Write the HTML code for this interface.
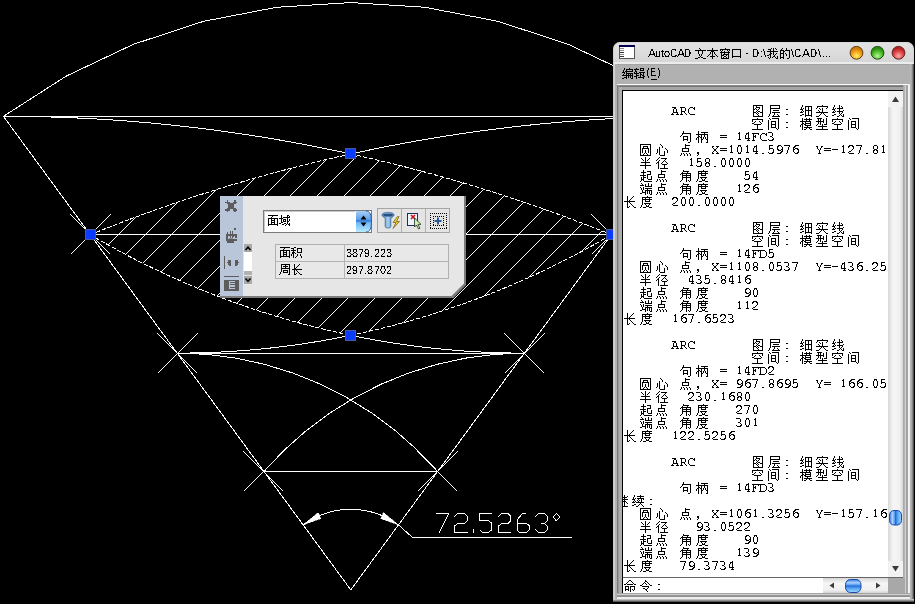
<!DOCTYPE html>
<html><head><meta charset="utf-8"><style>
*{margin:0;padding:0;box-sizing:border-box}
html,body{width:915px;height:604px;overflow:hidden;background:#000}
body{position:relative;font-family:"Liberation Sans",sans-serif}
.abs{position:absolute}
.r{position:absolute}
</style></head>
<body>
<svg width="915" height="604" viewBox="0 0 915 604" style="position:absolute;left:0;top:0">
<defs><clipPath id="lens"><path d="M90.27 234.69 L93.99 233.19 L97.72 231.70 L101.45 230.21 L105.19 228.74 L108.92 227.27 L112.67 225.82 L116.41 224.37 L120.16 222.93 L123.92 221.50 L127.67 220.09 L131.43 218.68 L135.20 217.28 L138.96 215.88 L142.73 214.50 L146.51 213.13 L150.29 211.77 L154.07 210.41 L157.85 209.07 L161.64 207.74 L165.43 206.41 L169.22 205.09 L173.02 203.79 L176.82 202.49 L180.62 201.20 L184.43 199.93 L188.24 198.66 L192.05 197.40 L195.87 196.15 L199.69 194.91 L203.51 193.68 L207.34 192.45 L211.17 191.24 L215.00 190.04 L218.83 188.85 L222.67 187.66 L226.51 186.49 L230.35 185.33 L234.20 184.17 L238.05 183.03 L241.90 181.89 L245.75 180.76 L249.61 179.65 L253.47 178.54 L257.33 177.44 L261.20 176.35 L265.07 175.28 L268.94 174.21 L272.81 173.15 L276.69 172.10 L280.57 171.06 L284.45 170.03 L288.33 169.01 L292.22 168.00 L296.11 166.99 L300.00 166.00 L303.89 165.02 L307.79 164.05 L311.69 163.09 L315.59 162.13 L319.49 161.19 L323.40 160.25 L327.31 159.33 L331.22 158.42 L335.13 157.51 L339.04 156.62 L342.96 155.73 L346.88 154.86 L350.80 153.99 L350.80 153.99 L354.72 154.86 L358.64 155.73 L362.56 156.62 L366.47 157.51 L370.38 158.42 L374.29 159.33 L378.20 160.25 L382.11 161.19 L386.01 162.13 L389.91 163.09 L393.81 164.05 L397.71 165.02 L401.60 166.00 L405.49 166.99 L409.38 168.00 L413.27 169.01 L417.15 170.03 L421.03 171.06 L424.91 172.10 L428.79 173.15 L432.66 174.21 L436.53 175.28 L440.40 176.35 L444.27 177.44 L448.13 178.54 L451.99 179.65 L455.85 180.76 L459.70 181.89 L463.55 183.03 L467.40 184.17 L471.25 185.33 L475.09 186.49 L478.93 187.66 L482.77 188.85 L486.60 190.04 L490.43 191.24 L494.26 192.45 L498.09 193.68 L501.91 194.91 L505.73 196.15 L509.55 197.40 L513.36 198.66 L517.17 199.93 L520.98 201.20 L524.78 202.49 L528.58 203.79 L532.38 205.09 L536.17 206.41 L539.96 207.74 L543.75 209.07 L547.53 210.41 L551.31 211.77 L555.09 213.13 L558.87 214.50 L562.64 215.88 L566.40 217.28 L570.17 218.68 L573.93 220.09 L577.68 221.50 L581.44 222.93 L585.19 224.37 L588.93 225.82 L592.68 227.27 L596.41 228.74 L600.15 230.21 L603.88 231.70 L607.61 233.19 L611.33 234.69 L611.33 234.73 L607.87 236.76 L604.41 238.77 L600.93 240.76 L597.45 242.74 L593.95 244.70 L590.45 246.64 L586.93 248.57 L583.41 250.48 L579.88 252.38 L576.34 254.26 L572.79 256.12 L569.23 257.96 L565.67 259.79 L562.09 261.60 L558.51 263.40 L554.92 265.18 L551.32 266.94 L547.71 268.68 L544.09 270.41 L540.47 272.12 L536.84 273.81 L533.20 275.49 L529.55 277.15 L525.90 278.79 L522.23 280.42 L518.56 282.03 L514.88 283.62 L511.20 285.19 L507.50 286.75 L503.80 288.28 L500.10 289.81 L496.38 291.31 L492.66 292.80 L488.93 294.27 L485.20 295.72 L481.46 297.15 L477.71 298.57 L473.95 299.97 L470.19 301.35 L466.42 302.71 L462.65 304.06 L458.87 305.39 L455.08 306.70 L451.29 307.99 L447.49 309.27 L443.68 310.53 L439.87 311.77 L436.05 312.99 L432.23 314.19 L428.40 315.38 L424.57 316.55 L420.73 317.70 L416.89 318.83 L413.04 319.94 L409.18 321.04 L405.32 322.12 L401.46 323.18 L397.59 324.22 L393.71 325.24 L389.84 326.25 L385.95 327.24 L382.06 328.20 L378.17 329.16 L374.27 330.09 L370.37 331.00 L366.46 331.90 L362.55 332.78 L358.64 333.64 L354.72 334.48 L350.80 335.30 L350.80 335.30 L346.88 334.48 L342.96 333.64 L339.05 332.78 L335.14 331.90 L331.23 331.00 L327.33 330.09 L323.43 329.16 L319.54 328.20 L315.65 327.24 L311.76 326.25 L307.89 325.24 L304.01 324.22 L300.14 323.18 L296.28 322.12 L292.42 321.04 L288.56 319.94 L284.71 318.83 L280.87 317.70 L277.03 316.55 L273.20 315.38 L269.37 314.19 L265.55 312.99 L261.73 311.77 L257.92 310.53 L254.11 309.27 L250.31 307.99 L246.52 306.70 L242.73 305.39 L238.95 304.06 L235.18 302.71 L231.41 301.35 L227.65 299.97 L223.89 298.57 L220.14 297.15 L216.40 295.72 L212.67 294.27 L208.94 292.80 L205.22 291.31 L201.50 289.81 L197.80 288.28 L194.10 286.75 L190.40 285.19 L186.72 283.62 L183.04 282.03 L179.37 280.42 L175.70 278.79 L172.05 277.15 L168.40 275.49 L164.76 273.81 L161.13 272.12 L157.51 270.41 L153.89 268.68 L150.28 266.94 L146.68 265.18 L143.09 263.40 L139.51 261.60 L135.93 259.79 L132.37 257.96 L128.81 256.12 L125.26 254.26 L121.72 252.38 L118.19 250.48 L114.67 248.57 L111.15 246.64 L107.65 244.70 L104.15 242.74 L100.67 240.76 L97.19 238.77 L93.73 236.76 L90.27 234.73Z"/></clipPath></defs>
<g fill="none" stroke="#fff" stroke-width="1" shape-rendering="crispEdges">
<path d="M698.18 116.33 L635.62 76.26 L568.50 44.41 L497.90 21.29 L424.94 7.27 L350.80 2.57 L276.66 7.27 L203.70 21.29 L133.10 44.41 L65.98 76.26 L3.42 116.33 M3.42 116.33 L350.80 589.86 L698.18 116.33 M3.42 116.33 L698.18 116.33 M698.18 116.31 L694.15 116.31 L690.13 116.33 L686.10 116.35 L682.08 116.39 L678.06 116.43 L674.03 116.49 L670.01 116.55 L665.99 116.63 L661.96 116.71 L657.94 116.81 L653.92 116.91 L649.89 117.03 L645.87 117.15 L641.85 117.29 L637.83 117.43 L633.81 117.59 L629.79 117.75 L625.77 117.93 L621.75 118.11 L617.73 118.31 L613.71 118.51 L609.69 118.73 L605.67 118.95 L601.66 119.19 L597.64 119.43 L593.62 119.68 L589.61 119.95 L585.59 120.22 L581.58 120.51 L577.57 120.80 L573.55 121.11 L569.54 121.42 L565.53 121.75 L561.52 122.08 L557.51 122.43 L553.50 122.78 L549.49 123.14 L545.49 123.52 L541.48 123.90 L537.48 124.30 L533.47 124.70 L529.47 125.12 L525.47 125.54 L521.47 125.97 L517.47 126.42 L513.47 126.87 L509.47 127.34 L505.48 127.81 L501.48 128.29 L497.49 128.79 L493.50 129.29 L489.51 129.80 L485.52 130.33 L481.53 130.86 L477.54 131.40 L473.55 131.96 L469.57 132.52 L465.59 133.09 L461.60 133.67 L457.62 134.27 L453.65 134.87 L449.67 135.48 L445.69 136.10 L441.72 136.74 L437.75 137.38 L433.78 138.03 L429.81 138.69 L425.84 139.36 L421.87 140.04 L417.91 140.74 L413.95 141.44 L409.98 142.15 L406.03 142.87 L402.07 143.60 L398.11 144.34 L394.16 145.09 L390.21 145.85 L386.26 146.62 L382.31 147.40 L378.36 148.19 L374.42 148.99 L370.48 149.80 L366.54 150.62 L362.60 151.44 L358.67 152.28 L354.73 153.13 L350.80 153.99 M350.80 153.99 L346.87 153.13 L342.93 152.28 L339.00 151.44 L335.06 150.62 L331.12 149.80 L327.18 148.99 L323.24 148.19 L319.29 147.40 L315.34 146.62 L311.39 145.85 L307.44 145.09 L303.49 144.34 L299.53 143.60 L295.57 142.87 L291.62 142.15 L287.65 141.44 L283.69 140.74 L279.73 140.04 L275.76 139.36 L271.79 138.69 L267.82 138.03 L263.85 137.38 L259.88 136.74 L255.91 136.10 L251.93 135.48 L247.95 134.87 L243.98 134.27 L240.00 133.67 L236.01 133.09 L232.03 132.52 L228.05 131.96 L224.06 131.40 L220.07 130.86 L216.08 130.33 L212.09 129.80 L208.10 129.29 L204.11 128.79 L200.12 128.29 L196.12 127.81 L192.13 127.34 L188.13 126.87 L184.13 126.42 L180.13 125.97 L176.13 125.54 L172.13 125.12 L168.13 124.70 L164.12 124.30 L160.12 123.90 L156.11 123.52 L152.11 123.14 L148.10 122.78 L144.09 122.43 L140.08 122.08 L136.07 121.75 L132.06 121.42 L128.05 121.11 L124.03 120.80 L120.02 120.51 L116.01 120.22 L111.99 119.95 L107.98 119.68 L103.96 119.43 L99.94 119.19 L95.93 118.95 L91.91 118.73 L87.89 118.51 L83.87 118.31 L79.85 118.11 L75.83 117.93 L71.81 117.75 L67.79 117.59 L63.77 117.43 L59.75 117.29 L55.73 117.15 L51.71 117.03 L47.68 116.91 L43.66 116.81 L39.64 116.71 L35.61 116.63 L31.59 116.55 L27.57 116.49 L23.54 116.43 L19.52 116.39 L15.50 116.35 L11.47 116.33 L7.45 116.31 L3.42 116.31 M177.11 353.12 L181.18 353.11 L185.25 353.08 L189.31 353.03 L193.38 352.96 L197.45 352.87 L201.51 352.77 L205.58 352.64 L209.64 352.50 L213.71 352.33 L217.77 352.15 L221.83 351.95 L225.90 351.72 L229.96 351.48 L234.02 351.22 L238.07 350.94 L242.13 350.64 L246.18 350.32 L250.24 349.99 L254.29 349.63 L258.34 349.25 L262.39 348.86 L266.43 348.44 L270.48 348.01 L274.52 347.55 L278.56 347.08 L282.60 346.59 L286.63 346.08 L290.67 345.55 L294.70 345.00 L298.72 344.43 L302.75 343.84 L306.77 343.23 L310.79 342.61 L314.81 341.96 L318.82 341.30 L322.83 340.62 L326.84 339.91 L330.84 339.19 L334.84 338.45 L338.83 337.69 L342.83 336.91 L346.82 336.12 L350.80 335.30 M350.80 335.30 L354.78 336.12 L358.77 336.91 L362.77 337.69 L366.76 338.45 L370.76 339.19 L374.76 339.91 L378.77 340.62 L382.78 341.30 L386.79 341.96 L390.81 342.61 L394.83 343.23 L398.85 343.84 L402.88 344.43 L406.90 345.00 L410.93 345.55 L414.97 346.08 L419.00 346.59 L423.04 347.08 L427.08 347.55 L431.12 348.01 L435.17 348.44 L439.21 348.86 L443.26 349.25 L447.31 349.63 L451.36 349.99 L455.42 350.32 L459.47 350.64 L463.53 350.94 L467.58 351.22 L471.64 351.48 L475.70 351.72 L479.77 351.95 L483.83 352.15 L487.89 352.33 L491.96 352.50 L496.02 352.64 L500.09 352.77 L504.15 352.87 L508.22 352.96 L512.29 353.03 L516.35 353.08 L520.42 353.11 L524.49 353.12 M524.49 353.08 L495.02 354.34 L465.77 358.10 L436.94 364.34 L408.75 373.02 L381.40 384.06 L355.10 397.40 L330.02 412.92 L306.36 430.53 L284.28 450.09 L263.96 471.46 M437.64 471.46 L417.32 450.09 L395.24 430.53 L371.58 412.92 L346.50 397.40 L320.20 384.06 L292.85 373.02 L264.66 364.34 L235.83 358.10 L206.58 354.34 L177.11 353.08 M90.27 234.69 L611.33 234.69 M177.11 353.12 L524.49 353.12 M263.96 471.46 L437.64 471.46"/>
<path d="M70.50 214.50 L110.50 254.50 M70.50 254.50 L110.50 214.50 M591.50 214.50 L631.50 254.50 M591.50 254.50 L631.50 214.50 M157.50 333.50 L197.50 373.50 M157.50 373.50 L197.50 333.50 M504.50 333.50 L544.50 373.50 M504.50 373.50 L544.50 333.50 M243.50 451.50 L283.50 491.50 M243.50 491.50 L283.50 451.50 M417.50 451.50 L457.50 491.50 M417.50 491.50 L457.50 451.50"/>
<path d="M350.80 153.99 L346.88 154.86 L342.96 155.73 L339.04 156.62 L335.13 157.51 L331.22 158.42 L327.31 159.33 L323.40 160.25 L319.49 161.19 L315.59 162.13 L311.69 163.09 L307.79 164.05 L303.89 165.02 L300.00 166.00 L296.11 166.99 L292.22 168.00 L288.33 169.01 L284.45 170.03 L280.57 171.06 L276.69 172.10 L272.81 173.15 L268.94 174.21 L265.07 175.28 L261.20 176.35 L257.33 177.44 L253.47 178.54 L249.61 179.65 L245.75 180.76 L241.90 181.89 L238.05 183.03 L234.20 184.17 L230.35 185.33 L226.51 186.49 L222.67 187.66 L218.83 188.85 L215.00 190.04 L211.17 191.24 L207.34 192.45 L203.51 193.68 L199.69 194.91 L195.87 196.15 L192.05 197.40 L188.24 198.66 L184.43 199.93 L180.62 201.20 L176.82 202.49 L173.02 203.79 L169.22 205.09 L165.43 206.41 L161.64 207.74 L157.85 209.07 L154.07 210.41 L150.29 211.77 L146.51 213.13 L142.73 214.50 L138.96 215.88 L135.20 217.28 L131.43 218.68 L127.67 220.09 L123.92 221.50 L120.16 222.93 L116.41 224.37 L112.67 225.82 L108.92 227.27 L105.19 228.74 L101.45 230.21 L97.72 231.70 L93.99 233.19 L90.27 234.69 M611.33 234.69 L607.61 233.19 L603.88 231.70 L600.15 230.21 L596.41 228.74 L592.68 227.27 L588.93 225.82 L585.19 224.37 L581.44 222.93 L577.68 221.50 L573.93 220.09 L570.17 218.68 L566.40 217.28 L562.64 215.88 L558.87 214.50 L555.09 213.13 L551.31 211.77 L547.53 210.41 L543.75 209.07 L539.96 207.74 L536.17 206.41 L532.38 205.09 L528.58 203.79 L524.78 202.49 L520.98 201.20 L517.17 199.93 L513.36 198.66 L509.55 197.40 L505.73 196.15 L501.91 194.91 L498.09 193.68 L494.26 192.45 L490.43 191.24 L486.60 190.04 L482.77 188.85 L478.93 187.66 L475.09 186.49 L471.25 185.33 L467.40 184.17 L463.55 183.03 L459.70 181.89 L455.85 180.76 L451.99 179.65 L448.13 178.54 L444.27 177.44 L440.40 176.35 L436.53 175.28 L432.66 174.21 L428.79 173.15 L424.91 172.10 L421.03 171.06 L417.15 170.03 L413.27 169.01 L409.38 168.00 L405.49 166.99 L401.60 166.00 L397.71 165.02 L393.81 164.05 L389.91 163.09 L386.01 162.13 L382.11 161.19 L378.20 160.25 L374.29 159.33 L370.38 158.42 L366.47 157.51 L362.56 156.62 L358.64 155.73 L354.72 154.86 L350.80 153.99 M350.80 335.30 L354.72 334.48 L358.64 333.64 L362.55 332.78 L366.46 331.90 L370.37 331.00 L374.27 330.09 L378.17 329.16 L382.06 328.20 L385.95 327.24 L389.84 326.25 L393.71 325.24 L397.59 324.22 L401.46 323.18 L405.32 322.12 L409.18 321.04 L413.04 319.94 L416.89 318.83 L420.73 317.70 L424.57 316.55 L428.40 315.38 L432.23 314.19 L436.05 312.99 L439.87 311.77 L443.68 310.53 L447.49 309.27 L451.29 307.99 L455.08 306.70 L458.87 305.39 L462.65 304.06 L466.42 302.71 L470.19 301.35 L473.95 299.97 L477.71 298.57 L481.46 297.15 L485.20 295.72 L488.93 294.27 L492.66 292.80 L496.38 291.31 L500.10 289.81 L503.80 288.28 L507.50 286.75 L511.20 285.19 L514.88 283.62 L518.56 282.03 L522.23 280.42 L525.90 278.79 L529.55 277.15 L533.20 275.49 L536.84 273.81 L540.47 272.12 L544.09 270.41 L547.71 268.68 L551.32 266.94 L554.92 265.18 L558.51 263.40 L562.09 261.60 L565.67 259.79 L569.23 257.96 L572.79 256.12 L576.34 254.26 L579.88 252.38 L583.41 250.48 L586.93 248.57 L590.45 246.64 L593.95 244.70 L597.45 242.74 L600.93 240.76 L604.41 238.77 L607.87 236.76 L611.33 234.73 M90.27 234.73 L93.73 236.76 L97.19 238.77 L100.67 240.76 L104.15 242.74 L107.65 244.70 L111.15 246.64 L114.67 248.57 L118.19 250.48 L121.72 252.38 L125.26 254.26 L128.81 256.12 L132.37 257.96 L135.93 259.79 L139.51 261.60 L143.09 263.40 L146.68 265.18 L150.28 266.94 L153.89 268.68 L157.51 270.41 L161.13 272.12 L164.76 273.81 L168.40 275.49 L172.05 277.15 L175.70 278.79 L179.37 280.42 L183.04 282.03 L186.72 283.62 L190.40 285.19 L194.10 286.75 L197.80 288.28 L201.50 289.81 L205.22 291.31 L208.94 292.80 L212.67 294.27 L216.40 295.72 L220.14 297.15 L223.89 298.57 L227.65 299.97 L231.41 301.35 L235.18 302.71 L238.95 304.06 L242.73 305.39 L246.52 306.70 L250.31 307.99 L254.11 309.27 L257.92 310.53 L261.73 311.77 L265.55 312.99 L269.37 314.19 L273.20 315.38 L277.03 316.55 L280.87 317.70 L284.71 318.83 L288.56 319.94 L292.42 321.04 L296.28 322.12 L300.14 323.18 L304.01 324.22 L307.89 325.24 L311.76 326.25 L315.65 327.24 L319.54 328.20 L323.43 329.16 L327.33 330.09 L331.23 331.00 L335.14 331.90 L339.05 332.78 L342.96 333.64 L346.88 334.48 L350.80 335.30" stroke-dasharray="4.5 1.6"/>
<g clip-path="url(#lens)"><path d="M-420 400 L-120 100 M-394 400 L-94 100 M-367 400 L-67 100 M-340 400 L-40 100 M-314 400 L-14 100 M-287 400 L13 100 M-260 400 L40 100 M-234 400 L66 100 M-207 400 L93 100 M-180 400 L120 100 M-154 400 L146 100 M-127 400 L173 100 M-100 400 L200 100 M-74 400 L226 100 M-47 400 L253 100 M-20 400 L280 100 M6 400 L306 100 M33 400 L333 100 M60 400 L360 100 M86 400 L386 100 M113 400 L413 100 M140 400 L440 100 M166 400 L466 100 M193 400 L493 100 M220 400 L520 100 M246 400 L546 100 M273 400 L573 100 M300 400 L600 100 M326 400 L626 100 M353 400 L653 100 M380 400 L680 100 M406 400 L706 100 M433 400 L733 100 M460 400 L760 100"/></g>
<path d="M303.13 524.87 L308.41 521.31 L313.96 518.17 L319.74 515.48 L325.72 513.26 L331.85 511.52 L338.10 510.27 L344.43 509.51 L350.80 509.26 L357.17 509.51 L363.50 510.27 L369.75 511.52 L375.88 513.26 L381.86 515.48 L387.64 518.17 L393.19 521.31 L398.47 524.87 M398.47 524.87 L412.5 537.5 L571.5 537.5"/>
<path d="M436.1 513.5 L448.8 513.5 L439.3 532.5 M454.2 516.6 L457.4 513.5 L464.3 513.5 L467.6 516.4 L467.6 520.6 L464.3 523.5 L457.4 523.5 L454.2 526.4 L454.2 532.5 L467.6 532.5 M473.5 529.3 L473.5 532.5 M491.8 513.5 L479.6 513.5 L479.6 520.6 L488.6 520.6 L491.8 523.4 L491.8 529.6 L488.6 532.5 L482.3 532.5 L479.6 529.6 M498.2 516.6 L501.4 513.5 L508.2 513.5 L510.8 516.4 L510.8 520.6 L508.2 523.5 L501.4 523.5 L498.2 526.4 L498.2 532.5 L510.8 532.5 M525.8 513.5 L522.3 513.5 L517.2 519.9 L517.2 529.7 L519.4 532.5 L526.1 532.5 L529.6 529.7 L529.6 525.8 L526.1 523.3 L517.2 523.3 M535.3 529.6 L538.4 532.5 L544.5 532.5 L547.6 529.6 L547.6 526.7 L544.5 523.6 L541.0 523.6 M544.5 523.6 L547.6 520.6 L547.6 516.4 L544.5 513.5 L538.4 513.5 L535.3 516.6 M556.4 513.5 L559.8 517.1 L556.4 520.8 L553.2 517.1Z"/>
</g>
<path d="M303.13 524.87 L318.25 512.53 L320.81 518.61ZM398.47 524.87 L383.35 512.53 L380.79 518.61Z" fill="#fff" stroke="#fff" stroke-width="0.5" shape-rendering="crispEdges"/>
<rect x="85" y="229" width="11" height="11" fill="#4a5a9c" shape-rendering="crispEdges"/><rect x="86" y="230" width="9" height="9" fill="#0a3cff" shape-rendering="crispEdges"/><rect x="606" y="229" width="11" height="11" fill="#4a5a9c" shape-rendering="crispEdges"/><rect x="607" y="230" width="9" height="9" fill="#0a3cff" shape-rendering="crispEdges"/><rect x="345" y="148" width="11" height="11" fill="#4a5a9c" shape-rendering="crispEdges"/><rect x="346" y="149" width="9" height="9" fill="#0a3cff" shape-rendering="crispEdges"/><rect x="345" y="330" width="11" height="11" fill="#4a5a9c" shape-rendering="crispEdges"/><rect x="346" y="331" width="9" height="9" fill="#0a3cff" shape-rendering="crispEdges"/>
</svg>

<svg class="abs" style="left:0;top:0" width="915" height="604">
<defs>
<linearGradient id="cbtn" x1="0" y1="0" x2="0" y2="1"><stop offset="0" stop-color="#a8d0f8"/><stop offset=".42" stop-color="#5c9ce8"/><stop offset=".47" stop-color="#2a72dc"/><stop offset=".55" stop-color="#6cb4f4"/><stop offset="1" stop-color="#b8ecff"/></linearGradient>
<linearGradient id="fun" x1="0" y1="0" x2="1" y2="0"><stop offset="0" stop-color="#4a78a8"/><stop offset=".5" stop-color="#a8d0f0"/><stop offset="1" stop-color="#3a6898"/></linearGradient>
</defs>
<polygon points="220,196 466,196 466,285 453.5,298 220,298" fill="#7c7c7c"/>
<polygon points="220,196 464,196 464,283.5 451.5,296 220,296" fill="#e6e6e6"/>
<rect x="220" y="196" width="23" height="100" fill="#b9c6da"/>
<g fill="#5c5c5c" shape-rendering="crispEdges">
<rect x="227" y="200" width="1" height="2"/><rect x="234" y="200" width="2" height="2"/><rect x="225" y="202" width="5" height="1"/><rect x="233" y="202" width="4" height="1"/><rect x="227" y="203" width="9" height="1"/><rect x="228" y="204" width="6" height="4"/><rect x="227" y="208" width="9" height="1"/><rect x="225" y="209" width="5" height="2"/><rect x="233" y="209" width="4" height="2"/><rect x="227" y="211" width="1" height="1"/><rect x="234" y="211" width="2" height="1"/>
<rect x="234" y="228" width="2" height="2"/><rect x="227" y="232" width="1" height="2"/><rect x="230" y="231" width="1" height="3"/><rect x="232" y="231" width="1" height="3"/><rect x="226" y="234" width="11" height="2"/><rect x="226" y="236" width="2" height="3"/><rect x="230" y="236" width="1" height="3"/><rect x="232" y="236" width="2" height="1"/><rect x="232" y="237" width="1" height="1"/><rect x="235" y="236" width="2" height="2"/><rect x="229" y="238" width="4" height="1" fill="#8a8f98"/><rect x="226" y="239" width="11" height="2"/><rect x="227" y="241" width="7" height="2"/>
<rect x="224" y="256" width="1" height="13"/>
<path d="M227 262.5L229 259.5h2v6h-2z"/>
<path d="M239 262.5L237 259.5h-2v6h2z"/>
<rect x="224" y="276" width="15" height="1"/>
<path d="M224 280h15v11h-15z M229 281v8h6v-8z"/>
<rect x="230" y="282" width="5" height="1"/><rect x="230" y="284" width="5" height="1"/><rect x="230" y="287" width="5" height="1"/>
</g>
<g shape-rendering="crispEdges">
<rect x="244" y="244" width="8" height="8" fill="#a9a9a9"/>
<rect x="244" y="252" width="8" height="19" fill="#fff"/>
<rect x="244" y="271" width="8" height="4" fill="#b2b2b2"/>
<rect x="244" y="276" width="8" height="8" fill="#a9a9a9"/>
</g>
<path d="M245.5 250L248 247.2L250.5 250" fill="none" stroke="#000" stroke-width="1.6"/>
<path d="M245.5 278.5L248 281.3L250.5 278.5" fill="none" stroke="#000" stroke-width="1.6"/>
<rect x="263.5" y="210.5" width="108" height="22" fill="#fff" stroke="#7c7c7c"/>
<path d="M264.5 231.5V211.5H355" fill="none" stroke="#c8c8c8"/>
<path d="M356 211h10c4 0 5.5 4 5.5 10.5s-1.5 10.5-5.5 10.5h-10z" fill="url(#cbtn)"/>
<path d="M366 211c4 0 5.5 4 5.5 10.5s-1.5 10.5-5.5 10.5" fill="none" stroke="#2a5aa8" stroke-width="1"/>
<path d="M363.5 215.5L366.5 219.5h-6z M363.5 226.5L366.5 222.5h-6z" fill="#000"/>
<rect x="377.5" y="208.5" width="72" height="24" fill="#e4e4e4" stroke="#a6a6a6"/>
<path d="M401.5 209v23M425.5 209v23" stroke="#b0b0b0"/>
<path d="M382 215c0-1.8 2.6-2.6 6-2.6s6 .8 6 2.6c0 1.2-1.5 2-3.2 3.2v8.2c0 1-1 1.6-2.8 1.6s-2.8-.6-2.8-1.6v-8.2c-1.7-1.2-3.2-2-3.2-3.2z" fill="url(#fun)" stroke="#3c6aa0" stroke-width=".8"/>
<ellipse cx="388" cy="215" rx="4.6" ry="1.5" fill="#26507e"/>
<path d="M397.5 216.5l-4.5 6h3l-3 6l6.5-7h-3l2.5-5z" fill="#f2cc2c" stroke="#6a5a10" stroke-width=".7"/>
<rect x="407.5" y="213.5" width="10" height="12" fill="#eef4fc" stroke="#1c2c5c"/>
<path d="M411 215l4 4M415 215l-4 4" stroke="#d01010" stroke-width="1.6"/>
<path d="M414.5 218v9l2-2l2 4l1.5-.8l-2-3.8h3z" fill="#d4f0b0" stroke="#203020" stroke-width=".8"/>
<g fill="#000" shape-rendering="crispEdges">
<rect x="430" y="213" width="1" height="1"/><rect x="430" y="228" width="1" height="1"/><rect x="432" y="213" width="1" height="1"/><rect x="432" y="228" width="1" height="1"/><rect x="434" y="213" width="1" height="1"/><rect x="434" y="228" width="1" height="1"/><rect x="436" y="213" width="1" height="1"/><rect x="436" y="228" width="1" height="1"/><rect x="438" y="213" width="1" height="1"/><rect x="438" y="228" width="1" height="1"/><rect x="440" y="213" width="1" height="1"/><rect x="440" y="228" width="1" height="1"/><rect x="442" y="213" width="1" height="1"/><rect x="442" y="228" width="1" height="1"/><rect x="444" y="213" width="1" height="1"/><rect x="444" y="228" width="1" height="1"/><rect x="446" y="213" width="1" height="1"/><rect x="446" y="228" width="1" height="1"/>
<rect x="430" y="213" width="1" height="1"/><rect x="446" y="213" width="1" height="1"/><rect x="430" y="215" width="1" height="1"/><rect x="446" y="215" width="1" height="1"/><rect x="430" y="217" width="1" height="1"/><rect x="446" y="217" width="1" height="1"/><rect x="430" y="219" width="1" height="1"/><rect x="446" y="219" width="1" height="1"/><rect x="430" y="221" width="1" height="1"/><rect x="446" y="221" width="1" height="1"/><rect x="430" y="223" width="1" height="1"/><rect x="446" y="223" width="1" height="1"/><rect x="430" y="225" width="1" height="1"/><rect x="446" y="225" width="1" height="1"/><rect x="430" y="227" width="1" height="1"/><rect x="446" y="227" width="1" height="1"/>
<rect x="433" y="216" width="1" height="1"/><rect x="433" y="225" width="1" height="1"/><rect x="435" y="216" width="1" height="1"/><rect x="435" y="225" width="1" height="1"/><rect x="437" y="216" width="1" height="1"/><rect x="437" y="225" width="1" height="1"/><rect x="439" y="216" width="1" height="1"/><rect x="439" y="225" width="1" height="1"/><rect x="441" y="216" width="1" height="1"/><rect x="441" y="225" width="1" height="1"/><rect x="443" y="216" width="1" height="1"/><rect x="443" y="225" width="1" height="1"/>
<rect x="433" y="216" width="1" height="1"/><rect x="443" y="216" width="1" height="1"/><rect x="433" y="218" width="1" height="1"/><rect x="443" y="218" width="1" height="1"/><rect x="433" y="220" width="1" height="1"/><rect x="443" y="220" width="1" height="1"/><rect x="433" y="222" width="1" height="1"/><rect x="443" y="222" width="1" height="1"/><rect x="433" y="224" width="1" height="1"/><rect x="443" y="224" width="1" height="1"/>
</g>
<path d="M438 217.5v7M434.5 221h7" stroke="#2a5a9a" stroke-width="2"/>
<rect x="275.5" y="244.5" width="173" height="34" fill="#e8e8e8" stroke="#b0b0b0"/>
<path d="M276 261.5h172M344.5 245v33" stroke="#b4b4b4"/>
</svg>


<svg class="abs" style="left:0;top:0" width="915" height="604">
<defs>
<linearGradient id="ttl" x1="0" y1="0" x2="0" y2="1"><stop offset="0" stop-color="#f2f2f2"/><stop offset=".05" stop-color="#f2f2f2"/><stop offset=".06" stop-color="#e2e2e2"/><stop offset=".9" stop-color="#d6d6d6"/><stop offset=".92" stop-color="#ececec"/><stop offset="1" stop-color="#ececec"/></linearGradient>
<linearGradient id="vtrk" x1="0" y1="0" x2="1" y2="0"><stop offset="0" stop-color="#d8d8d8"/><stop offset=".35" stop-color="#f6f6f6"/><stop offset=".8" stop-color="#f0f0f0"/><stop offset="1" stop-color="#d4d4d4"/></linearGradient>
<linearGradient id="htrk" x1="0" y1="0" x2="0" y2="1"><stop offset="0" stop-color="#d8d8d8"/><stop offset=".35" stop-color="#f6f6f6"/><stop offset=".8" stop-color="#f0f0f0"/><stop offset="1" stop-color="#d4d4d4"/></linearGradient>
<linearGradient id="thumbv" x1="0" y1="0" x2="1" y2="0"><stop offset="0" stop-color="#3a78e0"/><stop offset=".25" stop-color="#a8d2ff"/><stop offset=".42" stop-color="#5a9cf0"/><stop offset=".5" stop-color="#2a6cd8"/><stop offset=".7" stop-color="#5aaaf4"/><stop offset="1" stop-color="#9ad8ff"/></linearGradient>
<linearGradient id="thumbh" x1="0" y1="0" x2="0" y2="1"><stop offset="0" stop-color="#3a78e0"/><stop offset=".25" stop-color="#a8d2ff"/><stop offset=".42" stop-color="#5a9cf0"/><stop offset=".5" stop-color="#2a6cd8"/><stop offset=".7" stop-color="#5aaaf4"/><stop offset="1" stop-color="#9ad8ff"/></linearGradient>
<radialGradient id="go" cx="50%" cy="75%" r="60%"><stop offset="0" stop-color="#fff36a"/><stop offset=".6" stop-color="#f3a41c"/><stop offset="1" stop-color="#d07a08"/></radialGradient>
<radialGradient id="gg" cx="50%" cy="75%" r="60%"><stop offset="0" stop-color="#b8f59a"/><stop offset=".6" stop-color="#4fc02a"/><stop offset="1" stop-color="#2a8a10"/></radialGradient>
<radialGradient id="gr" cx="50%" cy="75%" r="60%"><stop offset="0" stop-color="#ffb0b0"/><stop offset=".6" stop-color="#e24848"/><stop offset="1" stop-color="#b82020"/></radialGradient>
</defs>
<path d="M613 64V49a7 7 0 0 1 7-7h287a7 7 0 0 1 7 7v15z" fill="url(#ttl)"/>
<path d="M613.5 64V49.5a7 7 0 0 1 7-7h286a7 7 0 0 1 7 7V64" fill="none" stroke="#c8c8c8" stroke-width="1" opacity=".6"/>
<g shape-rendering="crispEdges">
<rect x="613" y="64" width="1" height="537" fill="#cacaca"/><rect x="614" y="64" width="1" height="537" fill="#d4d4d4"/><rect x="615" y="64" width="1" height="537" fill="#b2b2b2"/><rect x="616" y="64" width="1" height="537" fill="#b0b0b0"/><rect x="617" y="64" width="296" height="20" fill="#b1b1b1"/><rect x="617" y="64" width="292" height="1" fill="#a4a4a4"/><rect x="617" y="84" width="292" height="1" fill="#fafafa"/><rect x="617" y="85" width="288" height="1" fill="#8a8a8a"/><rect x="617" y="86" width="288" height="1" fill="#747474"/><rect x="617" y="87" width="288" height="3" fill="#a6a6a6"/><rect x="622" y="90" width="282" height="1" fill="#000"/><rect x="617" y="85" width="1" height="508" fill="#7a7a7a"/><rect x="618" y="86" width="1" height="507" fill="#989898"/><rect x="619" y="87" width="3" height="506" fill="#aeaeae"/><rect x="622" y="90" width="1" height="503" fill="#000"/><rect x="903" y="85" width="1" height="508" fill="#ababab"/><rect x="904" y="85" width="1" height="508" fill="#b4b4b4"/><rect x="905" y="85" width="1" height="508" fill="#d0d0d0"/><rect x="906" y="85" width="1" height="508" fill="#a2a2a2"/><rect x="907" y="85" width="1" height="508" fill="#a6a6a6"/><rect x="908" y="84" width="1" height="509" fill="#f2f2f2"/><rect x="909" y="84" width="1" height="509" fill="#eeeeee"/><rect x="910" y="64" width="1" height="538" fill="#b6b6b6"/><rect x="911" y="64" width="1" height="538" fill="#a8a8a8"/><rect x="912" y="64" width="1" height="538" fill="#868686"/><rect x="913" y="64" width="1" height="538" fill="#505050"/><rect x="617" y="593" width="293" height="1" fill="#a4a4a4"/><rect x="617" y="594" width="293" height="1" fill="#d0d0d0"/><rect x="617" y="595" width="293" height="1" fill="#989898"/><rect x="617" y="596" width="293" height="1" fill="#8e8e8e"/><rect x="617" y="597" width="293" height="1" fill="#f0f0f0"/><rect x="617" y="598" width="293" height="1" fill="#ececec"/><rect x="613" y="599" width="301" height="1" fill="#c0c0c0"/><rect x="613" y="600" width="301" height="1" fill="#909090"/><rect x="613" y="601" width="301" height="1" fill="#5a5a5a"/>
<rect x="623" y="91" width="265" height="486" fill="#fff"/>
<rect x="888" y="91" width="15" height="486" fill="url(#vtrk)"/>
<rect x="888" y="91" width="15" height="16" fill="#f2f2f2"/>
<rect x="888" y="561" width="15" height="16" fill="#f2f2f2"/>
<rect x="623" y="577" width="280" height="1" fill="#666"/>
<rect x="623" y="578" width="200" height="15" fill="#fff"/>
<rect x="823" y="578" width="65" height="15" fill="url(#htrk)"/>
<rect x="888" y="578" width="17" height="15" fill="#a8a8a8"/>
</g>
<path d="M895.5 96.5L899 102h-7z M895.5 571.5L899 566h-7z" fill="#3c3c3c"/>
<rect x="889.5" y="510.5" width="12" height="14.5" rx="4.5" fill="url(#thumbv)" stroke="#1a48b0" stroke-width="1"/>
<path d="M829.5 585.5L834 582.5v6z M880.5 585.5L876 582.5v6z" fill="#3c3c3c"/>
<rect x="845.5" y="579.5" width="15.5" height="13" rx="5" fill="url(#thumbh)" stroke="#1a4aa8" stroke-width="1"/>
<circle cx="856.5" cy="52.8" r="6.4" fill="url(#go)" stroke="#5a3c14" stroke-width="1"/>
<circle cx="877.5" cy="52.8" r="6.4" fill="url(#gg)" stroke="#1e4a12" stroke-width="1"/>
<circle cx="898.5" cy="52.8" r="6.4" fill="url(#gr)" stroke="#5e2222" stroke-width="1"/>
<g shape-rendering="crispEdges">
<rect x="619" y="45" width="16" height="14" fill="#555"/>
<rect x="620" y="47" width="14" height="11" fill="#fff"/>
<rect x="619" y="45" width="16" height="2" fill="#000050"/>
<rect x="620" y="48" width="4" height="1" fill="#888"/><rect x="620" y="50" width="4" height="1" fill="#888"/><rect x="620" y="52" width="4" height="1" fill="#333"/><rect x="620" y="54" width="4" height="1" fill="#888"/><rect x="620" y="56" width="4" height="1" fill="#333"/>
</g>
</svg>

<svg class="abs" style="left:0;top:0" width="915" height="604" shape-rendering="crispEdges" fill="#000"><defs><symbol id="c53e3" overflow="visible"><path d="M1 3h9v1h-9zM1 4h1v1h-1zM9 4h1v1h-1zM1 5h1v1h-1zM9 5h1v1h-1zM1 6h1v1h-1zM9 6h1v1h-1zM1 7h1v1h-1zM9 7h1v1h-1zM1 8h1v1h-1zM9 8h1v1h-1zM1 9h1v1h-1zM9 9h1v1h-1zM1 10h9v1h-9zM1 11h1v1h-1zM9 11h1v1h-1z"/></symbol><symbol id="c5468" overflow="visible"><path d="M2 2h9v1h-9zM2 3h1v1h-1zM6 3h1v1h-1zM10 3h1v1h-1zM2 4h1v1h-1zM4 4h5v1h-5zM10 4h1v1h-1zM2 5h1v1h-1zM6 5h1v1h-1zM10 5h1v1h-1zM2 6h9v1h-9zM2 7h1v1h-1zM10 7h1v1h-1zM2 8h1v1h-1zM4 8h5v1h-5zM10 8h1v1h-1zM2 9h1v1h-1zM4 9h1v1h-1zM8 9h1v1h-1zM10 9h1v1h-1zM1 10h1v1h-1zM4 10h5v1h-5zM10 10h1v1h-1zM1 11h1v1h-1zM10 11h1v1h-1zM0 12h1v1h-1zM9 12h2v1h-2z"/></symbol><symbol id="c57df" overflow="visible"><path d="M2 2h1v1h-1zM8 2h2v1h-2zM2 3h1v1h-1zM8 3h1v1h-1zM10 3h1v1h-1zM2 4h1v1h-1zM4 4h7v1h-7zM0 5h4v1h-4zM8 5h1v1h-1zM2 6h1v1h-1zM4 6h3v1h-3zM8 6h1v1h-1zM10 6h1v1h-1zM2 7h1v1h-1zM4 7h1v1h-1zM6 7h1v1h-1zM8 7h1v1h-1zM10 7h1v1h-1zM2 8h1v1h-1zM4 8h3v1h-3zM8 8h2v1h-2zM2 9h2v1h-2zM8 9h1v1h-1zM0 10h2v1h-2zM5 10h2v1h-2zM8 10h1v1h-1zM10 10h1v1h-1zM3 11h2v1h-2zM7 11h1v1h-1zM9 11h2v1h-2zM6 12h1v1h-1zM10 12h1v1h-1z"/></symbol><symbol id="c6211" overflow="visible"><path d="M4 2h1v1h-1zM6 2h1v1h-1zM8 2h1v1h-1zM1 3h3v1h-3zM6 3h1v1h-1zM9 3h1v1h-1zM3 4h1v1h-1zM6 4h1v1h-1zM0 5h11v1h-11zM3 6h1v1h-1zM6 6h1v1h-1zM3 7h2v1h-2zM6 7h1v1h-1zM9 7h1v1h-1zM2 8h2v1h-2zM6 8h1v1h-1zM8 8h1v1h-1zM0 9h2v1h-2zM3 9h1v1h-1zM7 9h1v1h-1zM3 10h1v1h-1zM6 10h2v1h-2zM10 10h1v1h-1zM1 11h1v1h-1zM3 11h1v1h-1zM5 11h1v1h-1zM8 11h1v1h-1zM10 11h1v1h-1zM2 12h1v1h-1zM9 12h2v1h-2z"/></symbol><symbol id="c6587" overflow="visible"><path d="M4 2h1v1h-1zM5 3h1v1h-1zM0 4h11v1h-11zM3 5h1v1h-1zM7 5h1v1h-1zM3 6h1v1h-1zM7 6h1v1h-1zM3 7h1v1h-1zM7 7h1v1h-1zM4 8h1v1h-1zM6 8h1v1h-1zM4 9h1v1h-1zM6 9h1v1h-1zM5 10h1v1h-1zM3 11h2v1h-2zM6 11h2v1h-2zM0 12h3v1h-3zM8 12h3v1h-3z"/></symbol><symbol id="c672c" overflow="visible"><path d="M5 2h1v1h-1zM5 3h1v1h-1zM0 4h11v1h-11zM4 5h3v1h-3zM3 6h1v1h-1zM5 6h1v1h-1zM7 6h1v1h-1zM3 7h1v1h-1zM5 7h1v1h-1zM7 7h1v1h-1zM2 8h1v1h-1zM5 8h1v1h-1zM8 8h1v1h-1zM1 9h1v1h-1zM5 9h1v1h-1zM9 9h1v1h-1zM0 10h1v1h-1zM3 10h5v1h-5zM10 10h1v1h-1zM5 11h1v1h-1zM5 12h1v1h-1z"/></symbol><symbol id="c7684" overflow="visible"><path d="M3 2h1v1h-1zM7 2h1v1h-1zM2 3h1v1h-1zM7 3h1v1h-1zM1 4h4v1h-4zM6 4h5v1h-5zM1 5h1v1h-1zM4 5h2v1h-2zM10 5h1v1h-1zM1 6h1v1h-1zM4 6h1v1h-1zM10 6h1v1h-1zM1 7h4v1h-4zM6 7h1v1h-1zM10 7h1v1h-1zM1 8h1v1h-1zM4 8h1v1h-1zM7 8h1v1h-1zM10 8h1v1h-1zM1 9h1v1h-1zM4 9h1v1h-1zM7 9h1v1h-1zM10 9h1v1h-1zM1 10h1v1h-1zM4 10h1v1h-1zM10 10h1v1h-1zM1 11h4v1h-4zM10 11h1v1h-1zM1 12h1v1h-1zM4 12h1v1h-1zM8 12h2v1h-2z"/></symbol><symbol id="c79ef" overflow="visible"><path d="M3 2h2v1h-2zM0 3h3v1h-3zM6 3h5v1h-5zM2 4h1v1h-1zM6 4h1v1h-1zM10 4h1v1h-1zM0 5h5v1h-5zM6 5h1v1h-1zM10 5h1v1h-1zM2 6h1v1h-1zM6 6h1v1h-1zM10 6h1v1h-1zM1 7h3v1h-3zM6 7h5v1h-5zM1 8h2v1h-2zM4 8h1v1h-1zM0 9h1v1h-1zM2 9h1v1h-1zM6 9h1v1h-1zM9 9h1v1h-1zM0 10h1v1h-1zM2 10h1v1h-1zM6 10h1v1h-1zM9 10h1v1h-1zM2 11h1v1h-1zM5 11h1v1h-1zM10 11h1v1h-1zM2 12h1v1h-1zM4 12h1v1h-1zM10 12h1v1h-1z"/></symbol><symbol id="c7a97" overflow="visible"><path d="M6 2h1v1h-1zM1 3h10v1h-10zM1 4h1v1h-1zM3 4h1v1h-1zM8 4h1v1h-1zM10 4h1v1h-1zM2 5h1v1h-1zM5 5h1v1h-1zM9 5h1v1h-1zM1 6h10v1h-10zM2 7h1v1h-1zM5 7h1v1h-1zM9 7h1v1h-1zM2 8h1v1h-1zM4 8h6v1h-6zM2 9h3v1h-3zM7 9h1v1h-1zM9 9h1v1h-1zM2 10h1v1h-1zM5 10h2v1h-2zM9 10h1v1h-1zM2 11h1v1h-1zM4 11h1v1h-1zM7 11h1v1h-1zM9 11h1v1h-1zM2 12h8v1h-8z"/></symbol><symbol id="c7f16" overflow="visible"><path d="M2 2h1v1h-1zM7 2h1v1h-1zM2 3h1v1h-1zM4 3h7v1h-7zM1 4h1v1h-1zM4 4h1v1h-1zM10 4h1v1h-1zM1 5h1v1h-1zM3 5h8v1h-8zM0 6h3v1h-3zM4 6h1v1h-1zM2 7h1v1h-1zM4 7h7v1h-7zM1 8h1v1h-1zM4 8h1v1h-1zM6 8h1v1h-1zM8 8h1v1h-1zM10 8h1v1h-1zM0 9h11v1h-11zM4 10h1v1h-1zM6 10h1v1h-1zM8 10h1v1h-1zM10 10h1v1h-1zM2 11h3v1h-3zM6 11h1v1h-1zM8 11h1v1h-1zM10 11h1v1h-1zM0 12h2v1h-2zM4 12h1v1h-1zM9 12h2v1h-2z"/></symbol><symbol id="c8f91" overflow="visible"><path d="M2 2h1v1h-1zM6 2h4v1h-4zM0 3h5v1h-5zM6 3h1v1h-1zM9 3h1v1h-1zM1 4h1v1h-1zM6 4h4v1h-4zM1 5h2v1h-2zM0 6h1v1h-1zM2 6h1v1h-1zM5 6h6v1h-6zM0 7h5v1h-5zM6 7h1v1h-1zM9 7h1v1h-1zM2 8h1v1h-1zM6 8h2v1h-2zM9 8h1v1h-1zM2 9h3v1h-3zM6 9h1v1h-1zM8 9h2v1h-2zM0 10h3v1h-3zM6 10h1v1h-1zM9 10h2v1h-2zM2 11h1v1h-1zM4 11h6v1h-6zM2 12h1v1h-1zM9 12h1v1h-1z"/></symbol><symbol id="c957f" overflow="visible"><path d="M3 2h1v1h-1zM8 2h1v1h-1zM3 3h1v1h-1zM7 3h1v1h-1zM3 4h1v1h-1zM6 4h1v1h-1zM3 5h1v1h-1zM5 5h1v1h-1zM3 6h2v1h-2zM1 7h10v1h-10zM3 8h1v1h-1zM5 8h1v1h-1zM3 9h1v1h-1zM6 9h1v1h-1zM3 10h1v1h-1zM7 10h1v1h-1zM3 11h1v1h-1zM5 11h1v1h-1zM8 11h1v1h-1zM3 12h2v1h-2zM9 12h2v1h-2z"/></symbol><symbol id="c9762" overflow="visible"><path d="M1 2h10v1h-10zM5 3h1v1h-1zM4 4h1v1h-1zM1 5h10v1h-10zM1 6h1v1h-1zM4 6h1v1h-1zM7 6h1v1h-1zM10 6h1v1h-1zM1 7h1v1h-1zM4 7h4v1h-4zM10 7h1v1h-1zM1 8h1v1h-1zM4 8h1v1h-1zM7 8h1v1h-1zM10 8h1v1h-1zM1 9h1v1h-1zM4 9h4v1h-4zM10 9h1v1h-1zM1 10h1v1h-1zM4 10h1v1h-1zM7 10h1v1h-1zM10 10h1v1h-1zM1 11h10v1h-10zM1 12h1v1h-1zM10 12h1v1h-1z"/></symbol><symbol id="k4ee4" overflow="visible"><path d="M5 2h1v1h-1zM5 3h2v1h-2zM4 4h1v1h-1zM7 4h1v1h-1zM3 5h1v1h-1zM5 5h1v1h-1zM8 5h1v1h-1zM2 6h1v1h-1zM6 6h1v1h-1zM9 6h1v1h-1zM0 7h2v1h-2zM10 7h2v1h-2zM2 8h7v1h-7zM8 9h1v1h-1zM3 10h2v1h-2zM7 10h1v1h-1zM5 11h2v1h-2zM6 12h1v1h-1zM7 13h1v1h-1z"/></symbol><symbol id="k534a" overflow="visible"><path d="M5 2h1v1h-1zM1 3h1v1h-1zM5 3h1v1h-1zM9 3h1v1h-1zM2 4h1v1h-1zM5 4h1v1h-1zM8 4h1v1h-1zM3 5h1v1h-1zM5 5h1v1h-1zM7 5h1v1h-1zM5 6h1v1h-1zM1 7h9v1h-9zM5 8h1v1h-1zM5 9h1v1h-1zM0 10h11v1h-11zM5 11h1v1h-1zM5 12h1v1h-1zM5 13h1v1h-1z"/></symbol><symbol id="k53e5" overflow="visible"><path d="M3 2h1v1h-1zM3 3h1v1h-1zM2 4h9v1h-9zM2 5h1v1h-1zM10 5h1v1h-1zM1 6h1v1h-1zM10 6h1v1h-1zM0 7h1v1h-1zM3 7h5v1h-5zM10 7h1v1h-1zM3 8h1v1h-1zM7 8h1v1h-1zM10 8h1v1h-1zM3 9h1v1h-1zM7 9h1v1h-1zM10 9h1v1h-1zM3 10h5v1h-5zM10 10h1v1h-1zM3 11h1v1h-1zM7 11h1v1h-1zM10 11h1v1h-1zM10 12h1v1h-1zM8 13h2v1h-2z"/></symbol><symbol id="k547d" overflow="visible"><path d="M5 2h2v1h-2zM4 3h1v1h-1zM7 3h1v1h-1zM3 4h1v1h-1zM8 4h1v1h-1zM2 5h1v1h-1zM9 5h1v1h-1zM0 6h2v1h-2zM3 6h6v1h-6zM10 6h2v1h-2zM1 8h4v1h-4zM6 8h5v1h-5zM1 9h1v1h-1zM4 9h1v1h-1zM6 9h1v1h-1zM10 9h1v1h-1zM1 10h1v1h-1zM4 10h1v1h-1zM6 10h1v1h-1zM10 10h1v1h-1zM1 11h4v1h-4zM6 11h1v1h-1zM8 11h1v1h-1zM10 11h1v1h-1zM1 12h1v1h-1zM4 12h1v1h-1zM6 12h1v1h-1zM9 12h1v1h-1zM6 13h1v1h-1z"/></symbol><symbol id="k56fe" overflow="visible"><path d="M1 2h10v1h-10zM1 3h1v1h-1zM4 3h1v1h-1zM10 3h1v1h-1zM1 4h1v1h-1zM4 4h4v1h-4zM10 4h1v1h-1zM1 5h1v1h-1zM3 5h1v1h-1zM7 5h1v1h-1zM10 5h1v1h-1zM1 6h2v1h-2zM4 6h1v1h-1zM6 6h1v1h-1zM10 6h1v1h-1zM1 7h1v1h-1zM5 7h1v1h-1zM10 7h1v1h-1zM1 8h1v1h-1zM4 8h1v1h-1zM6 8h2v1h-2zM10 8h1v1h-1zM1 9h3v1h-3zM5 9h1v1h-1zM8 9h3v1h-3zM1 10h1v1h-1zM4 10h1v1h-1zM6 10h1v1h-1zM10 10h1v1h-1zM1 11h1v1h-1zM5 11h1v1h-1zM10 11h1v1h-1zM1 12h1v1h-1zM6 12h1v1h-1zM10 12h1v1h-1zM1 13h10v1h-10z"/></symbol><symbol id="k5706" overflow="visible"><path d="M0 2h11v1h-11zM0 3h1v1h-1zM10 3h1v1h-1zM0 4h1v1h-1zM3 4h5v1h-5zM10 4h1v1h-1zM0 5h1v1h-1zM3 5h1v1h-1zM7 5h1v1h-1zM10 5h1v1h-1zM0 6h1v1h-1zM2 6h7v1h-7zM10 6h1v1h-1zM0 7h1v1h-1zM2 7h1v1h-1zM8 7h1v1h-1zM10 7h1v1h-1zM0 8h1v1h-1zM2 8h1v1h-1zM5 8h1v1h-1zM8 8h1v1h-1zM10 8h1v1h-1zM0 9h1v1h-1zM2 9h1v1h-1zM5 9h1v1h-1zM8 9h1v1h-1zM10 9h1v1h-1zM0 10h1v1h-1zM2 10h1v1h-1zM5 10h1v1h-1zM8 10h1v1h-1zM10 10h1v1h-1zM0 11h1v1h-1zM4 11h1v1h-1zM6 11h1v1h-1zM10 11h1v1h-1zM0 12h1v1h-1zM3 12h1v1h-1zM7 12h1v1h-1zM10 12h1v1h-1zM0 13h11v1h-11z"/></symbol><symbol id="k578b" overflow="visible"><path d="M1 2h5v1h-5zM10 2h1v1h-1zM2 3h1v1h-1zM4 3h1v1h-1zM7 3h1v1h-1zM10 3h1v1h-1zM2 4h1v1h-1zM4 4h1v1h-1zM7 4h1v1h-1zM10 4h1v1h-1zM0 5h8v1h-8zM10 5h1v1h-1zM2 6h1v1h-1zM4 6h1v1h-1zM7 6h1v1h-1zM10 6h1v1h-1zM2 7h1v1h-1zM4 7h1v1h-1zM10 7h1v1h-1zM1 8h1v1h-1zM4 8h1v1h-1zM6 8h1v1h-1zM8 8h3v1h-3zM0 9h1v1h-1zM6 9h1v1h-1zM2 10h9v1h-9zM6 11h1v1h-1zM6 12h1v1h-1zM0 13h12v1h-12z"/></symbol><symbol id="k5b9e" overflow="visible"><path d="M6 2h1v1h-1zM1 3h11v1h-11zM1 4h1v1h-1zM11 4h1v1h-1zM0 5h1v1h-1zM3 5h1v1h-1zM6 5h1v1h-1zM10 5h1v1h-1zM4 6h1v1h-1zM6 6h1v1h-1zM2 7h1v1h-1zM6 7h1v1h-1zM3 8h1v1h-1zM6 8h1v1h-1zM0 9h12v1h-12zM5 10h1v1h-1zM7 10h1v1h-1zM4 11h1v1h-1zM8 11h1v1h-1zM3 12h1v1h-1zM9 12h1v1h-1zM0 13h3v1h-3zM10 13h2v1h-2z"/></symbol><symbol id="k5c42" overflow="visible"><path d="M2 2h10v1h-10zM2 3h1v1h-1zM11 3h1v1h-1zM2 4h1v1h-1zM11 4h1v1h-1zM2 5h10v1h-10zM2 6h1v1h-1zM2 7h1v1h-1zM5 7h6v1h-6zM2 8h1v1h-1zM2 9h1v1h-1zM4 9h8v1h-8zM2 10h1v1h-1zM6 10h1v1h-1zM1 11h1v1h-1zM6 11h1v1h-1zM9 11h1v1h-1zM1 12h1v1h-1zM5 12h1v1h-1zM10 12h1v1h-1zM0 13h1v1h-1zM4 13h8v1h-8z"/></symbol><symbol id="k5ea6" overflow="visible"><path d="M7 2h1v1h-1zM2 3h10v1h-10zM2 4h1v1h-1zM5 4h1v1h-1zM9 4h1v1h-1zM2 5h10v1h-10zM2 6h1v1h-1zM5 6h1v1h-1zM9 6h1v1h-1zM2 7h1v1h-1zM5 7h5v1h-5zM2 8h1v1h-1zM2 9h1v1h-1zM4 9h7v1h-7zM2 10h1v1h-1zM5 10h1v1h-1zM9 10h1v1h-1zM1 11h1v1h-1zM6 11h1v1h-1zM8 11h1v1h-1zM1 12h1v1h-1zM6 12h3v1h-3zM0 13h1v1h-1zM3 13h3v1h-3zM9 13h3v1h-3z"/></symbol><symbol id="k5f84" overflow="visible"><path d="M3 2h1v1h-1zM2 3h1v1h-1zM5 3h6v1h-6zM1 4h1v1h-1zM9 4h1v1h-1zM0 5h1v1h-1zM3 5h1v1h-1zM8 5h1v1h-1zM2 6h1v1h-1zM7 6h1v1h-1zM9 6h1v1h-1zM1 7h2v1h-2zM6 7h1v1h-1zM10 7h1v1h-1zM0 8h1v1h-1zM2 8h1v1h-1zM5 8h1v1h-1zM11 8h1v1h-1zM2 9h1v1h-1zM6 9h5v1h-5zM2 10h1v1h-1zM8 10h1v1h-1zM2 11h1v1h-1zM8 11h1v1h-1zM2 12h1v1h-1zM8 12h1v1h-1zM2 13h1v1h-1zM4 13h8v1h-8z"/></symbol><symbol id="k5fc3" overflow="visible"><path d="M4 2h1v1h-1zM5 3h1v1h-1zM6 4h1v1h-1zM3 5h1v1h-1zM6 5h1v1h-1zM3 6h1v1h-1zM9 6h1v1h-1zM1 7h1v1h-1zM3 7h1v1h-1zM10 7h1v1h-1zM1 8h1v1h-1zM3 8h1v1h-1zM11 8h1v1h-1zM1 9h1v1h-1zM3 9h1v1h-1zM8 9h1v1h-1zM11 9h1v1h-1zM1 10h1v1h-1zM3 10h1v1h-1zM8 10h1v1h-1zM11 10h1v1h-1zM0 11h1v1h-1zM3 11h1v1h-1zM8 11h1v1h-1zM3 12h1v1h-1zM8 12h1v1h-1zM4 13h5v1h-5z"/></symbol><symbol id="k67c4" overflow="visible"><path d="M2 2h1v1h-1zM2 3h1v1h-1zM5 3h7v1h-7zM2 4h1v1h-1zM8 4h1v1h-1zM0 5h12v1h-12zM2 6h1v1h-1zM5 6h1v1h-1zM8 6h1v1h-1zM11 6h1v1h-1zM2 7h2v1h-2zM5 7h1v1h-1zM8 7h1v1h-1zM11 7h1v1h-1zM1 8h2v1h-2zM4 8h2v1h-2zM7 8h1v1h-1zM9 8h1v1h-1zM11 8h1v1h-1zM0 9h1v1h-1zM2 9h1v1h-1zM5 9h1v1h-1zM7 9h1v1h-1zM9 9h1v1h-1zM11 9h1v1h-1zM0 10h1v1h-1zM2 10h1v1h-1zM5 10h2v1h-2zM10 10h2v1h-2zM2 11h1v1h-1zM5 11h1v1h-1zM11 11h1v1h-1zM2 12h1v1h-1zM5 12h1v1h-1zM11 12h1v1h-1zM2 13h1v1h-1zM5 13h1v1h-1zM10 13h2v1h-2z"/></symbol><symbol id="k6a21" overflow="visible"><path d="M2 2h1v1h-1zM6 2h1v1h-1zM9 2h1v1h-1zM2 3h1v1h-1zM4 3h8v1h-8zM2 4h1v1h-1zM6 4h1v1h-1zM9 4h1v1h-1zM0 5h11v1h-11zM2 6h1v1h-1zM5 6h1v1h-1zM10 6h1v1h-1zM2 7h2v1h-2zM5 7h6v1h-6zM1 8h2v1h-2zM4 8h2v1h-2zM10 8h1v1h-1zM0 9h1v1h-1zM2 9h1v1h-1zM5 9h6v1h-6zM0 10h1v1h-1zM2 10h1v1h-1zM7 10h1v1h-1zM2 11h1v1h-1zM4 11h8v1h-8zM2 12h1v1h-1zM6 12h1v1h-1zM9 12h1v1h-1zM2 13h1v1h-1zM4 13h2v1h-2zM10 13h2v1h-2z"/></symbol><symbol id="k70b9" overflow="visible"><path d="M5 2h1v1h-1zM5 3h5v1h-5zM5 4h1v1h-1zM5 5h1v1h-1zM2 6h7v1h-7zM2 7h1v1h-1zM8 7h1v1h-1zM2 8h1v1h-1zM8 8h1v1h-1zM2 9h7v1h-7zM1 11h1v1h-1zM3 11h1v1h-1zM6 11h1v1h-1zM9 11h1v1h-1zM1 12h1v1h-1zM4 12h1v1h-1zM7 12h1v1h-1zM10 12h1v1h-1zM0 13h1v1h-1zM4 13h1v1h-1zM7 13h1v1h-1zM10 13h1v1h-1z"/></symbol><symbol id="k7a7a" overflow="visible"><path d="M5 2h1v1h-1zM0 3h11v1h-11zM0 4h1v1h-1zM10 4h1v1h-1zM0 5h1v1h-1zM3 5h1v1h-1zM7 5h1v1h-1zM10 5h1v1h-1zM2 6h1v1h-1zM8 6h1v1h-1zM0 7h2v1h-2zM9 7h1v1h-1zM2 8h7v1h-7zM5 9h1v1h-1zM5 10h1v1h-1zM5 11h1v1h-1zM5 12h1v1h-1zM0 13h11v1h-11z"/></symbol><symbol id="k7aef" overflow="visible"><path d="M1 2h1v1h-1zM8 2h1v1h-1zM2 3h1v1h-1zM5 3h1v1h-1zM8 3h1v1h-1zM11 3h1v1h-1zM0 4h4v1h-4zM5 4h1v1h-1zM8 4h1v1h-1zM11 4h1v1h-1zM5 5h7v1h-7zM0 6h1v1h-1zM3 6h1v1h-1zM1 7h1v1h-1zM3 7h1v1h-1zM5 7h7v1h-7zM1 8h1v1h-1zM3 8h1v1h-1zM7 8h1v1h-1zM2 9h1v1h-1zM5 9h7v1h-7zM2 10h1v1h-1zM5 10h1v1h-1zM7 10h1v1h-1zM9 10h1v1h-1zM11 10h1v1h-1zM2 11h4v1h-4zM7 11h1v1h-1zM9 11h1v1h-1zM11 11h1v1h-1zM0 12h2v1h-2zM5 12h1v1h-1zM7 12h1v1h-1zM9 12h1v1h-1zM11 12h1v1h-1zM5 13h1v1h-1zM10 13h2v1h-2z"/></symbol><symbol id="k7ebf" overflow="visible"><path d="M2 2h1v1h-1zM7 2h1v1h-1zM2 3h1v1h-1zM7 3h1v1h-1zM9 3h1v1h-1zM1 4h1v1h-1zM7 4h1v1h-1zM10 4h1v1h-1zM1 5h1v1h-1zM3 5h1v1h-1zM5 5h6v1h-6zM0 6h3v1h-3zM7 6h1v1h-1zM2 7h1v1h-1zM7 7h1v1h-1zM11 7h1v1h-1zM1 8h1v1h-1zM3 8h1v1h-1zM5 8h6v1h-6zM0 9h3v1h-3zM7 9h1v1h-1zM10 9h1v1h-1zM7 10h1v1h-1zM9 10h1v1h-1zM2 11h2v1h-2zM8 11h1v1h-1zM11 11h1v1h-1zM0 12h2v1h-2zM7 12h1v1h-1zM9 12h1v1h-1zM11 12h1v1h-1zM5 13h2v1h-2zM10 13h2v1h-2z"/></symbol><symbol id="k7ec6" overflow="visible"><path d="M2 2h1v1h-1zM2 3h1v1h-1zM5 3h7v1h-7zM1 4h1v1h-1zM5 4h1v1h-1zM8 4h1v1h-1zM11 4h1v1h-1zM1 5h1v1h-1zM3 5h1v1h-1zM5 5h1v1h-1zM8 5h1v1h-1zM11 5h1v1h-1zM0 6h3v1h-3zM5 6h1v1h-1zM8 6h1v1h-1zM11 6h1v1h-1zM2 7h1v1h-1zM5 7h7v1h-7zM1 8h1v1h-1zM3 8h1v1h-1zM5 8h1v1h-1zM8 8h1v1h-1zM11 8h1v1h-1zM0 9h3v1h-3zM5 9h1v1h-1zM8 9h1v1h-1zM11 9h1v1h-1zM5 10h1v1h-1zM8 10h1v1h-1zM11 10h1v1h-1zM2 11h2v1h-2zM5 11h1v1h-1zM8 11h1v1h-1zM11 11h1v1h-1zM0 12h2v1h-2zM5 12h7v1h-7zM5 13h1v1h-1zM11 13h1v1h-1z"/></symbol><symbol id="k7ee7" overflow="visible"><path d="M2 2h1v1h-1zM4 2h1v1h-1zM8 2h1v1h-1zM2 3h1v1h-1zM4 3h2v1h-2zM8 3h1v1h-1zM11 3h1v1h-1zM1 4h1v1h-1zM4 4h1v1h-1zM6 4h5v1h-5zM1 5h1v1h-1zM3 5h2v1h-2zM8 5h1v1h-1zM0 6h3v1h-3zM4 6h8v1h-8zM2 7h1v1h-1zM4 7h1v1h-1zM8 7h1v1h-1zM1 8h1v1h-1zM3 8h2v1h-2zM7 8h3v1h-3zM0 9h3v1h-3zM4 9h1v1h-1zM6 9h1v1h-1zM8 9h1v1h-1zM10 9h1v1h-1zM4 10h2v1h-2zM8 10h1v1h-1zM11 10h1v1h-1zM2 11h3v1h-3zM8 11h1v1h-1zM0 12h2v1h-2zM4 12h1v1h-1zM8 12h1v1h-1zM4 13h8v1h-8z"/></symbol><symbol id="k7eed" overflow="visible"><path d="M2 2h1v1h-1zM8 2h1v1h-1zM2 3h1v1h-1zM5 3h7v1h-7zM1 4h1v1h-1zM8 4h1v1h-1zM1 5h1v1h-1zM3 5h1v1h-1zM5 5h7v1h-7zM0 6h3v1h-3zM6 6h1v1h-1zM9 6h1v1h-1zM11 6h1v1h-1zM2 7h1v1h-1zM5 7h1v1h-1zM7 7h1v1h-1zM9 7h1v1h-1zM1 8h1v1h-1zM3 8h1v1h-1zM6 8h1v1h-1zM9 8h1v1h-1zM0 9h3v1h-3zM4 9h8v1h-8zM8 10h1v1h-1zM2 11h2v1h-2zM7 11h1v1h-1zM9 11h1v1h-1zM0 12h2v1h-2zM6 12h1v1h-1zM10 12h1v1h-1zM4 13h2v1h-2zM11 13h1v1h-1z"/></symbol><symbol id="k89d2" overflow="visible"><path d="M3 2h1v1h-1zM3 3h6v1h-6zM2 4h1v1h-1zM7 4h1v1h-1zM1 5h10v1h-10zM0 6h1v1h-1zM2 6h1v1h-1zM6 6h1v1h-1zM10 6h1v1h-1zM2 7h9v1h-9zM2 8h1v1h-1zM6 8h1v1h-1zM10 8h1v1h-1zM2 9h9v1h-9zM2 10h1v1h-1zM6 10h1v1h-1zM10 10h1v1h-1zM2 11h1v1h-1zM6 11h1v1h-1zM10 11h1v1h-1zM1 12h1v1h-1zM6 12h1v1h-1zM8 12h1v1h-1zM10 12h1v1h-1zM0 13h1v1h-1zM6 13h1v1h-1zM9 13h1v1h-1z"/></symbol><symbol id="k8d77" overflow="visible"><path d="M3 2h1v1h-1zM3 3h1v1h-1zM7 3h4v1h-4zM1 4h5v1h-5zM10 4h1v1h-1zM3 5h1v1h-1zM10 5h1v1h-1zM3 6h1v1h-1zM7 6h4v1h-4zM0 7h6v1h-6zM7 7h1v1h-1zM3 8h1v1h-1zM7 8h1v1h-1zM11 8h1v1h-1zM1 9h1v1h-1zM3 9h3v1h-3zM7 9h1v1h-1zM11 9h1v1h-1zM1 10h1v1h-1zM3 10h1v1h-1zM7 10h1v1h-1zM11 10h1v1h-1zM1 11h3v1h-3zM8 11h4v1h-4zM1 12h1v1h-1zM3 12h1v1h-1zM0 13h1v1h-1zM4 13h8v1h-8z"/></symbol><symbol id="k957f" overflow="visible"><path d="M3 2h1v1h-1zM9 2h1v1h-1zM3 3h1v1h-1zM8 3h1v1h-1zM3 4h1v1h-1zM7 4h1v1h-1zM3 5h1v1h-1zM6 5h1v1h-1zM3 6h1v1h-1zM5 6h1v1h-1zM0 7h11v1h-11zM3 8h1v1h-1zM5 8h1v1h-1zM3 9h1v1h-1zM6 9h1v1h-1zM3 10h1v1h-1zM7 10h1v1h-1zM3 11h1v1h-1zM8 11h1v1h-1zM3 12h1v1h-1zM5 12h1v1h-1zM9 12h1v1h-1zM3 13h2v1h-2zM10 13h2v1h-2z"/></symbol><symbol id="k95f4" overflow="visible"><path d="M1 2h1v1h-1zM4 2h7v1h-7zM2 3h1v1h-1zM10 3h1v1h-1zM0 4h1v1h-1zM10 4h1v1h-1zM0 5h1v1h-1zM3 5h5v1h-5zM10 5h1v1h-1zM0 6h1v1h-1zM3 6h1v1h-1zM7 6h1v1h-1zM10 6h1v1h-1zM0 7h1v1h-1zM3 7h1v1h-1zM7 7h1v1h-1zM10 7h1v1h-1zM0 8h1v1h-1zM3 8h5v1h-5zM10 8h1v1h-1zM0 9h1v1h-1zM3 9h1v1h-1zM7 9h1v1h-1zM10 9h1v1h-1zM0 10h1v1h-1zM3 10h1v1h-1zM7 10h1v1h-1zM10 10h1v1h-1zM0 11h1v1h-1zM3 11h5v1h-5zM10 11h1v1h-1zM0 12h1v1h-1zM8 12h1v1h-1zM10 12h1v1h-1zM0 13h1v1h-1zM9 13h1v1h-1z"/></symbol><symbol id="kff0c" overflow="visible"><path d="M3 10h2v1h-2zM3 11h2v1h-2zM4 12h1v1h-1zM3 13h1v1h-1z"/></symbol><symbol id="m2d" overflow="visible"><path d="M1 7h6v1h-6z"/></symbol><symbol id="m2e" overflow="visible"><path d="M3 11h2v1h-2z"/></symbol><symbol id="m30" overflow="visible"><path d="M3 3h3v1h-3zM3 4h1v1h-1zM5 4h1v1h-1zM2 5h1v1h-1zM6 5h1v1h-1zM2 6h1v1h-1zM6 6h1v1h-1zM2 7h1v1h-1zM6 7h1v1h-1zM2 8h1v1h-1zM6 8h1v1h-1zM2 9h1v1h-1zM6 9h1v1h-1zM3 10h1v1h-1zM5 10h1v1h-1zM3 11h3v1h-3z"/></symbol><symbol id="m31" overflow="visible"><path d="M4 3h1v1h-1zM3 4h2v1h-2zM4 5h1v1h-1zM4 6h1v1h-1zM4 7h1v1h-1zM4 8h1v1h-1zM4 9h1v1h-1zM3 10h3v1h-3z"/></symbol><symbol id="m32" overflow="visible"><path d="M2 3h4v1h-4zM1 4h2v1h-2zM5 4h2v1h-2zM1 5h1v1h-1zM6 5h1v1h-1zM6 6h1v1h-1zM5 7h1v1h-1zM4 8h1v1h-1zM2 9h2v1h-2zM1 10h1v1h-1zM2 11h5v1h-5z"/></symbol><symbol id="m33" overflow="visible"><path d="M1 3h4v1h-4zM5 4h1v1h-1zM5 5h1v1h-1zM5 6h1v1h-1zM3 7h2v1h-2zM5 8h1v1h-1zM6 9h1v1h-1zM1 10h1v1h-1zM5 10h2v1h-2zM2 11h4v1h-4z"/></symbol><symbol id="m34" overflow="visible"><path d="M5 3h1v1h-1zM3 4h3v1h-3zM3 5h1v1h-1zM5 5h1v1h-1zM2 6h1v1h-1zM5 6h1v1h-1zM2 7h1v1h-1zM5 7h1v1h-1zM2 8h1v1h-1zM5 8h1v1h-1zM2 9h5v1h-5zM5 10h1v1h-1zM4 11h3v1h-3z"/></symbol><symbol id="m35" overflow="visible"><path d="M2 3h4v1h-4zM2 4h1v1h-1zM2 5h1v1h-1zM2 6h4v1h-4zM2 7h1v1h-1zM6 7h1v1h-1zM6 8h1v1h-1zM6 9h1v1h-1zM1 10h1v1h-1zM5 10h2v1h-2zM2 11h4v1h-4z"/></symbol><symbol id="m36" overflow="visible"><path d="M4 3h4v1h-4zM3 4h2v1h-2zM2 5h2v1h-2zM2 6h1v1h-1zM4 6h3v1h-3zM2 7h2v1h-2zM6 7h2v1h-2zM2 8h1v1h-1zM7 8h1v1h-1zM2 9h1v1h-1zM7 9h1v1h-1zM3 10h1v1h-1zM6 10h2v1h-2zM4 11h3v1h-3z"/></symbol><symbol id="m37" overflow="visible"><path d="M1 3h6v1h-6zM6 4h1v1h-1zM5 5h1v1h-1zM5 6h1v1h-1zM5 7h1v1h-1zM4 8h1v1h-1zM4 9h1v1h-1zM4 10h1v1h-1zM3 11h1v1h-1z"/></symbol><symbol id="m38" overflow="visible"><path d="M3 3h3v1h-3zM2 4h1v1h-1zM6 4h1v1h-1zM2 5h1v1h-1zM6 5h1v1h-1zM2 6h1v1h-1zM6 6h1v1h-1zM3 7h3v1h-3zM2 8h2v1h-2zM5 8h2v1h-2zM2 9h1v1h-1zM6 9h1v1h-1zM2 10h1v1h-1zM6 10h1v1h-1zM3 11h3v1h-3z"/></symbol><symbol id="m39" overflow="visible"><path d="M3 3h3v1h-3zM2 4h2v1h-2zM6 4h1v1h-1zM2 5h1v1h-1zM7 5h1v1h-1zM2 6h1v1h-1zM7 6h1v1h-1zM2 7h2v1h-2zM6 7h2v1h-2zM3 8h3v1h-3zM7 8h1v1h-1zM6 9h2v1h-2zM5 10h2v1h-2zM2 11h4v1h-4z"/></symbol><symbol id="m3a" overflow="visible"><path d="M3 6h2v1h-2zM3 11h2v1h-2z"/></symbol><symbol id="m3d" overflow="visible"><path d="M1 6h7v1h-7zM1 8h7v1h-7z"/></symbol><symbol id="m41" overflow="visible"><path d="M1 4h4v1h-4zM3 5h2v1h-2zM2 6h1v1h-1zM5 6h1v1h-1zM2 7h1v1h-1zM5 7h1v1h-1zM2 8h1v1h-1zM5 8h1v1h-1zM2 9h5v1h-5zM1 10h1v1h-1zM6 10h1v1h-1zM0 11h3v1h-3zM5 11h3v1h-3z"/></symbol><symbol id="m43" overflow="visible"><path d="M3 4h3v1h-3zM7 4h1v1h-1zM2 5h1v1h-1zM6 5h2v1h-2zM1 6h1v1h-1zM7 6h1v1h-1zM1 7h1v1h-1zM1 8h1v1h-1zM1 9h1v1h-1zM2 10h1v1h-1zM3 11h5v1h-5z"/></symbol><symbol id="m44" overflow="visible"><path d="M0 4h6v1h-6zM1 5h1v1h-1zM6 5h1v1h-1zM1 6h1v1h-1zM7 6h1v1h-1zM1 7h1v1h-1zM7 7h1v1h-1zM1 8h1v1h-1zM7 8h1v1h-1zM1 9h1v1h-1zM7 9h1v1h-1zM1 10h1v1h-1zM6 10h1v1h-1zM0 11h6v1h-6z"/></symbol><symbol id="m46" overflow="visible"><path d="M1 4h7v1h-7zM2 5h1v1h-1zM7 5h1v1h-1zM2 6h1v1h-1zM4 6h1v1h-1zM2 7h3v1h-3zM2 8h1v1h-1zM4 8h1v1h-1zM2 9h1v1h-1zM2 10h1v1h-1zM1 11h3v1h-3z"/></symbol><symbol id="m52" overflow="visible"><path d="M1 4h5v1h-5zM2 5h1v1h-1zM6 5h1v1h-1zM2 6h1v1h-1zM6 6h1v1h-1zM2 7h1v1h-1zM6 7h1v1h-1zM2 8h4v1h-4zM2 9h1v1h-1zM5 9h1v1h-1zM2 10h1v1h-1zM6 10h1v1h-1zM1 11h3v1h-3zM7 11h1v1h-1z"/></symbol><symbol id="m58" overflow="visible"><path d="M1 4h2v1h-2zM5 4h3v1h-3zM1 5h1v1h-1zM6 5h1v1h-1zM2 6h1v1h-1zM5 6h1v1h-1zM3 7h2v1h-2zM3 8h2v1h-2zM2 9h1v1h-1zM5 9h1v1h-1zM1 10h1v1h-1zM6 10h1v1h-1zM1 11h2v1h-2zM5 11h3v1h-3z"/></symbol><symbol id="m59" overflow="visible"><path d="M1 4h2v1h-2zM6 4h2v1h-2zM2 5h1v1h-1zM6 5h1v1h-1zM2 6h1v1h-1zM5 6h1v1h-1zM3 7h1v1h-1zM5 7h1v1h-1zM4 8h1v1h-1zM4 9h1v1h-1zM4 10h1v1h-1zM3 11h3v1h-3z"/></symbol><symbol id="s28" overflow="visible"><path d="M2 2h1v1h-1zM2 3h1v1h-1zM1 4h1v1h-1zM1 5h1v1h-1zM1 6h1v1h-1zM1 7h1v1h-1zM1 8h1v1h-1zM1 9h1v1h-1zM2 10h1v1h-1zM2 11h1v1h-1z"/></symbol><symbol id="s29" overflow="visible"><path d="M1 2h1v1h-1zM1 3h1v1h-1zM2 4h1v1h-1zM2 5h1v1h-1zM2 6h1v1h-1zM2 7h1v1h-1zM2 8h1v1h-1zM2 9h1v1h-1zM1 10h1v1h-1zM1 11h1v1h-1z"/></symbol><symbol id="s2d" overflow="visible"><path d="M1 6h2v1h-2z"/></symbol><symbol id="s2e" overflow="visible"><path d="M1 9h1v1h-1z"/></symbol><symbol id="s30" overflow="visible"><path d="M1 2h4v1h-4zM1 3h1v1h-1zM4 3h1v1h-1zM1 4h1v1h-1zM4 4h1v1h-1zM0 5h1v1h-1zM5 5h1v1h-1zM0 6h1v1h-1zM5 6h1v1h-1zM1 7h1v1h-1zM4 7h1v1h-1zM1 8h1v1h-1zM4 8h1v1h-1zM2 9h2v1h-2z"/></symbol><symbol id="s32" overflow="visible"><path d="M1 2h4v1h-4zM1 3h1v1h-1zM4 3h1v1h-1zM4 4h1v1h-1zM4 5h1v1h-1zM3 6h1v1h-1zM2 7h1v1h-1zM1 8h1v1h-1zM1 9h4v1h-4z"/></symbol><symbol id="s33" overflow="visible"><path d="M1 2h4v1h-4zM1 3h1v1h-1zM4 3h1v1h-1zM4 4h1v1h-1zM2 5h2v1h-2zM4 6h1v1h-1zM5 7h1v1h-1zM1 8h1v1h-1zM4 8h1v1h-1zM1 9h4v1h-4z"/></symbol><symbol id="s37" overflow="visible"><path d="M1 2h4v1h-4zM4 3h1v1h-1zM4 4h1v1h-1zM3 5h1v1h-1zM3 6h1v1h-1zM2 7h1v1h-1zM2 8h1v1h-1zM2 9h1v1h-1z"/></symbol><symbol id="s38" overflow="visible"><path d="M1 2h4v1h-4zM1 3h1v1h-1zM4 3h1v1h-1zM1 4h1v1h-1zM4 4h1v1h-1zM2 5h2v1h-2zM1 6h1v1h-1zM4 6h1v1h-1zM0 7h1v1h-1zM5 7h1v1h-1zM1 8h1v1h-1zM4 8h1v1h-1zM1 9h4v1h-4z"/></symbol><symbol id="s39" overflow="visible"><path d="M1 2h3v1h-3zM1 3h1v1h-1zM4 3h1v1h-1zM0 4h1v1h-1zM4 4h1v1h-1zM1 5h1v1h-1zM4 5h1v1h-1zM1 6h4v1h-4zM4 7h1v1h-1zM1 8h1v1h-1zM4 8h1v1h-1zM1 9h3v1h-3z"/></symbol><symbol id="s3a" overflow="visible"><path d="M1 4h1v1h-1zM1 9h1v1h-1z"/></symbol><symbol id="s41" overflow="visible"><path d="M3 2h2v1h-2zM3 3h2v1h-2zM2 4h1v1h-1zM5 4h1v1h-1zM2 5h1v1h-1zM5 5h1v1h-1zM2 6h1v1h-1zM5 6h2v1h-2zM1 7h6v1h-6zM1 8h1v1h-1zM6 8h1v1h-1zM0 9h1v1h-1zM7 9h1v1h-1z"/></symbol><symbol id="s43" overflow="visible"><path d="M2 2h4v1h-4zM1 3h1v1h-1zM5 3h1v1h-1zM1 4h1v1h-1zM1 5h1v1h-1zM1 6h1v1h-1zM1 7h1v1h-1zM1 8h1v1h-1zM5 8h2v1h-2zM2 9h4v1h-4z"/></symbol><symbol id="s44" overflow="visible"><path d="M1 2h4v1h-4zM1 3h1v1h-1zM5 3h1v1h-1zM1 4h1v1h-1zM5 4h1v1h-1zM1 5h1v1h-1zM5 5h2v1h-2zM1 6h1v1h-1zM5 6h2v1h-2zM1 7h1v1h-1zM5 7h1v1h-1zM1 8h1v1h-1zM5 8h1v1h-1zM1 9h4v1h-4z"/></symbol><symbol id="s45" overflow="visible"><path d="M1 2h4v1h-4zM1 3h1v1h-1zM1 4h1v1h-1zM1 5h4v1h-4zM1 6h1v1h-1zM1 7h1v1h-1zM1 8h1v1h-1zM1 9h5v1h-5z"/></symbol><symbol id="s5c" overflow="visible"><path d="M0 2h1v1h-1zM0 3h1v1h-1zM1 4h1v1h-1zM1 5h1v1h-1zM1 6h1v1h-1zM1 7h1v1h-1zM2 8h1v1h-1zM2 9h1v1h-1z"/></symbol><symbol id="s6f" overflow="visible"><path d="M1 4h4v1h-4zM1 5h1v1h-1zM4 5h1v1h-1zM0 6h1v1h-1zM5 6h1v1h-1zM0 7h1v1h-1zM5 7h1v1h-1zM1 8h1v1h-1zM4 8h1v1h-1zM1 9h4v1h-4z"/></symbol><symbol id="s74" overflow="visible"><path d="M1 3h1v1h-1zM0 4h3v1h-3zM1 5h1v1h-1zM1 6h1v1h-1zM1 7h1v1h-1zM1 8h1v1h-1zM1 9h2v1h-2z"/></symbol><symbol id="s75" overflow="visible"><path d="M1 4h1v1h-1zM4 4h1v1h-1zM1 5h1v1h-1zM4 5h1v1h-1zM1 6h1v1h-1zM4 6h1v1h-1zM1 7h1v1h-1zM4 7h1v1h-1zM1 8h1v1h-1zM4 8h1v1h-1zM1 9h4v1h-4z"/></symbol><clipPath id="tclip"><rect x="623" y="91" width="265" height="502"/></clipPath></defs>
<g clip-path="url(#tclip)"><use href="#m41" x="671" y="103"/><use href="#m52" x="679" y="103"/><use href="#m43" x="687" y="103"/><use href="#k56fe" x="752" y="103"/><use href="#k5c42" x="768" y="103"/><use href="#m3a" x="783" y="103"/><use href="#k7ec6" x="800" y="103"/><use href="#k5b9e" x="816" y="103"/><use href="#k7ebf" x="832" y="103"/><use href="#k7a7a" x="752" y="116"/><use href="#k95f4" x="768" y="116"/><use href="#m3a" x="783" y="116"/><use href="#k6a21" x="800" y="116"/><use href="#k578b" x="816" y="116"/><use href="#k7a7a" x="832" y="116"/><use href="#k95f4" x="848" y="116"/><use href="#k53e5" x="680" y="129"/><use href="#k67c4" x="696" y="129"/><use href="#m3d" x="719" y="129"/><use href="#m31" x="735" y="129"/><use href="#m34" x="743" y="129"/><use href="#m46" x="751" y="129"/><use href="#m43" x="759" y="129"/><use href="#m33" x="767" y="129"/><use href="#k5706" x="640" y="142"/><use href="#k5fc3" x="656" y="142"/><use href="#k70b9" x="680" y="142"/><use href="#kff0c" x="694" y="142"/><use href="#m58" x="711" y="142"/><use href="#m3d" x="719" y="142"/><use href="#m31" x="727" y="142"/><use href="#m30" x="735" y="142"/><use href="#m31" x="743" y="142"/><use href="#m34" x="751" y="142"/><use href="#m2e" x="759" y="142"/><use href="#m35" x="767" y="142"/><use href="#m39" x="775" y="142"/><use href="#m37" x="783" y="142"/><use href="#m36" x="791" y="142"/><use href="#m59" x="815" y="142"/><use href="#m3d" x="823" y="142"/><use href="#m2d" x="831" y="142"/><use href="#m31" x="839" y="142"/><use href="#m32" x="847" y="142"/><use href="#m37" x="855" y="142"/><use href="#m2e" x="863" y="142"/><use href="#m38" x="871" y="142"/><use href="#m31" x="879" y="142"/><use href="#k534a" x="640" y="155"/><use href="#k5f84" x="656" y="155"/><use href="#m31" x="687" y="155"/><use href="#m35" x="695" y="155"/><use href="#m38" x="703" y="155"/><use href="#m2e" x="711" y="155"/><use href="#m30" x="719" y="155"/><use href="#m30" x="727" y="155"/><use href="#m30" x="735" y="155"/><use href="#m30" x="743" y="155"/><use href="#k8d77" x="640" y="168"/><use href="#k70b9" x="656" y="168"/><use href="#k89d2" x="680" y="168"/><use href="#k5ea6" x="696" y="168"/><use href="#m35" x="743" y="168"/><use href="#m34" x="751" y="168"/><use href="#k7aef" x="640" y="181"/><use href="#k70b9" x="656" y="181"/><use href="#k89d2" x="680" y="181"/><use href="#k5ea6" x="696" y="181"/><use href="#m31" x="735" y="181"/><use href="#m32" x="743" y="181"/><use href="#m36" x="751" y="181"/><use href="#k957f" x="624" y="194"/><use href="#k5ea6" x="640" y="194"/><use href="#m32" x="671" y="194"/><use href="#m30" x="679" y="194"/><use href="#m30" x="687" y="194"/><use href="#m2e" x="695" y="194"/><use href="#m30" x="703" y="194"/><use href="#m30" x="711" y="194"/><use href="#m30" x="719" y="194"/><use href="#m30" x="727" y="194"/><use href="#m41" x="671" y="220"/><use href="#m52" x="679" y="220"/><use href="#m43" x="687" y="220"/><use href="#k56fe" x="752" y="220"/><use href="#k5c42" x="768" y="220"/><use href="#m3a" x="783" y="220"/><use href="#k7ec6" x="800" y="220"/><use href="#k5b9e" x="816" y="220"/><use href="#k7ebf" x="832" y="220"/><use href="#k7a7a" x="752" y="233"/><use href="#k95f4" x="768" y="233"/><use href="#m3a" x="783" y="233"/><use href="#k6a21" x="800" y="233"/><use href="#k578b" x="816" y="233"/><use href="#k7a7a" x="832" y="233"/><use href="#k95f4" x="848" y="233"/><use href="#k53e5" x="680" y="246"/><use href="#k67c4" x="696" y="246"/><use href="#m3d" x="719" y="246"/><use href="#m31" x="735" y="246"/><use href="#m34" x="743" y="246"/><use href="#m46" x="751" y="246"/><use href="#m44" x="759" y="246"/><use href="#m35" x="767" y="246"/><use href="#k5706" x="640" y="259"/><use href="#k5fc3" x="656" y="259"/><use href="#k70b9" x="680" y="259"/><use href="#kff0c" x="694" y="259"/><use href="#m58" x="711" y="259"/><use href="#m3d" x="719" y="259"/><use href="#m31" x="727" y="259"/><use href="#m31" x="735" y="259"/><use href="#m30" x="743" y="259"/><use href="#m38" x="751" y="259"/><use href="#m2e" x="759" y="259"/><use href="#m30" x="767" y="259"/><use href="#m35" x="775" y="259"/><use href="#m33" x="783" y="259"/><use href="#m37" x="791" y="259"/><use href="#m59" x="815" y="259"/><use href="#m3d" x="823" y="259"/><use href="#m2d" x="831" y="259"/><use href="#m34" x="839" y="259"/><use href="#m33" x="847" y="259"/><use href="#m36" x="855" y="259"/><use href="#m2e" x="863" y="259"/><use href="#m32" x="871" y="259"/><use href="#m35" x="879" y="259"/><use href="#k534a" x="640" y="272"/><use href="#k5f84" x="656" y="272"/><use href="#m34" x="687" y="272"/><use href="#m33" x="695" y="272"/><use href="#m35" x="703" y="272"/><use href="#m2e" x="711" y="272"/><use href="#m38" x="719" y="272"/><use href="#m34" x="727" y="272"/><use href="#m31" x="735" y="272"/><use href="#m36" x="743" y="272"/><use href="#k8d77" x="640" y="285"/><use href="#k70b9" x="656" y="285"/><use href="#k89d2" x="680" y="285"/><use href="#k5ea6" x="696" y="285"/><use href="#m39" x="743" y="285"/><use href="#m30" x="751" y="285"/><use href="#k7aef" x="640" y="298"/><use href="#k70b9" x="656" y="298"/><use href="#k89d2" x="680" y="298"/><use href="#k5ea6" x="696" y="298"/><use href="#m31" x="735" y="298"/><use href="#m31" x="743" y="298"/><use href="#m32" x="751" y="298"/><use href="#k957f" x="624" y="311"/><use href="#k5ea6" x="640" y="311"/><use href="#m31" x="671" y="311"/><use href="#m36" x="679" y="311"/><use href="#m37" x="687" y="311"/><use href="#m2e" x="695" y="311"/><use href="#m36" x="703" y="311"/><use href="#m35" x="711" y="311"/><use href="#m32" x="719" y="311"/><use href="#m33" x="727" y="311"/><use href="#m41" x="671" y="337"/><use href="#m52" x="679" y="337"/><use href="#m43" x="687" y="337"/><use href="#k56fe" x="752" y="337"/><use href="#k5c42" x="768" y="337"/><use href="#m3a" x="783" y="337"/><use href="#k7ec6" x="800" y="337"/><use href="#k5b9e" x="816" y="337"/><use href="#k7ebf" x="832" y="337"/><use href="#k7a7a" x="752" y="350"/><use href="#k95f4" x="768" y="350"/><use href="#m3a" x="783" y="350"/><use href="#k6a21" x="800" y="350"/><use href="#k578b" x="816" y="350"/><use href="#k7a7a" x="832" y="350"/><use href="#k95f4" x="848" y="350"/><use href="#k53e5" x="680" y="363"/><use href="#k67c4" x="696" y="363"/><use href="#m3d" x="719" y="363"/><use href="#m31" x="735" y="363"/><use href="#m34" x="743" y="363"/><use href="#m46" x="751" y="363"/><use href="#m44" x="759" y="363"/><use href="#m32" x="767" y="363"/><use href="#k5706" x="640" y="376"/><use href="#k5fc3" x="656" y="376"/><use href="#k70b9" x="680" y="376"/><use href="#kff0c" x="694" y="376"/><use href="#m58" x="711" y="376"/><use href="#m3d" x="719" y="376"/><use href="#m39" x="735" y="376"/><use href="#m36" x="743" y="376"/><use href="#m37" x="751" y="376"/><use href="#m2e" x="759" y="376"/><use href="#m38" x="767" y="376"/><use href="#m36" x="775" y="376"/><use href="#m39" x="783" y="376"/><use href="#m35" x="791" y="376"/><use href="#m59" x="815" y="376"/><use href="#m3d" x="823" y="376"/><use href="#m31" x="839" y="376"/><use href="#m36" x="847" y="376"/><use href="#m36" x="855" y="376"/><use href="#m2e" x="863" y="376"/><use href="#m30" x="871" y="376"/><use href="#m35" x="879" y="376"/><use href="#k534a" x="640" y="389"/><use href="#k5f84" x="656" y="389"/><use href="#m32" x="687" y="389"/><use href="#m33" x="695" y="389"/><use href="#m30" x="703" y="389"/><use href="#m2e" x="711" y="389"/><use href="#m31" x="719" y="389"/><use href="#m36" x="727" y="389"/><use href="#m38" x="735" y="389"/><use href="#m30" x="743" y="389"/><use href="#k8d77" x="640" y="402"/><use href="#k70b9" x="656" y="402"/><use href="#k89d2" x="680" y="402"/><use href="#k5ea6" x="696" y="402"/><use href="#m32" x="735" y="402"/><use href="#m37" x="743" y="402"/><use href="#m30" x="751" y="402"/><use href="#k7aef" x="640" y="415"/><use href="#k70b9" x="656" y="415"/><use href="#k89d2" x="680" y="415"/><use href="#k5ea6" x="696" y="415"/><use href="#m33" x="735" y="415"/><use href="#m30" x="743" y="415"/><use href="#m31" x="751" y="415"/><use href="#k957f" x="624" y="428"/><use href="#k5ea6" x="640" y="428"/><use href="#m31" x="671" y="428"/><use href="#m32" x="679" y="428"/><use href="#m32" x="687" y="428"/><use href="#m2e" x="695" y="428"/><use href="#m35" x="703" y="428"/><use href="#m32" x="711" y="428"/><use href="#m35" x="719" y="428"/><use href="#m36" x="727" y="428"/><use href="#m41" x="671" y="454"/><use href="#m52" x="679" y="454"/><use href="#m43" x="687" y="454"/><use href="#k56fe" x="752" y="454"/><use href="#k5c42" x="768" y="454"/><use href="#m3a" x="783" y="454"/><use href="#k7ec6" x="800" y="454"/><use href="#k5b9e" x="816" y="454"/><use href="#k7ebf" x="832" y="454"/><use href="#k7a7a" x="752" y="467"/><use href="#k95f4" x="768" y="467"/><use href="#m3a" x="783" y="467"/><use href="#k6a21" x="800" y="467"/><use href="#k578b" x="816" y="467"/><use href="#k7a7a" x="832" y="467"/><use href="#k95f4" x="848" y="467"/><use href="#k53e5" x="680" y="480"/><use href="#k67c4" x="696" y="480"/><use href="#m3d" x="719" y="480"/><use href="#m31" x="735" y="480"/><use href="#m34" x="743" y="480"/><use href="#m46" x="751" y="480"/><use href="#m44" x="759" y="480"/><use href="#m33" x="767" y="480"/><use href="#k7ee7" x="616" y="493"/><use href="#k7eed" x="632" y="493"/><use href="#m3a" x="647" y="493"/><use href="#k5706" x="640" y="506"/><use href="#k5fc3" x="656" y="506"/><use href="#k70b9" x="680" y="506"/><use href="#kff0c" x="694" y="506"/><use href="#m58" x="711" y="506"/><use href="#m3d" x="719" y="506"/><use href="#m31" x="727" y="506"/><use href="#m30" x="735" y="506"/><use href="#m36" x="743" y="506"/><use href="#m31" x="751" y="506"/><use href="#m2e" x="759" y="506"/><use href="#m33" x="767" y="506"/><use href="#m32" x="775" y="506"/><use href="#m35" x="783" y="506"/><use href="#m36" x="791" y="506"/><use href="#m59" x="815" y="506"/><use href="#m3d" x="823" y="506"/><use href="#m2d" x="831" y="506"/><use href="#m31" x="839" y="506"/><use href="#m35" x="847" y="506"/><use href="#m37" x="855" y="506"/><use href="#m2e" x="863" y="506"/><use href="#m31" x="871" y="506"/><use href="#m36" x="879" y="506"/><use href="#k534a" x="640" y="519"/><use href="#k5f84" x="656" y="519"/><use href="#m39" x="695" y="519"/><use href="#m33" x="703" y="519"/><use href="#m2e" x="711" y="519"/><use href="#m30" x="719" y="519"/><use href="#m35" x="727" y="519"/><use href="#m32" x="735" y="519"/><use href="#m32" x="743" y="519"/><use href="#k8d77" x="640" y="532"/><use href="#k70b9" x="656" y="532"/><use href="#k89d2" x="680" y="532"/><use href="#k5ea6" x="696" y="532"/><use href="#m39" x="743" y="532"/><use href="#m30" x="751" y="532"/><use href="#k7aef" x="640" y="545"/><use href="#k70b9" x="656" y="545"/><use href="#k89d2" x="680" y="545"/><use href="#k5ea6" x="696" y="545"/><use href="#m31" x="735" y="545"/><use href="#m33" x="743" y="545"/><use href="#m39" x="751" y="545"/><use href="#k957f" x="624" y="558"/><use href="#k5ea6" x="640" y="558"/><use href="#m37" x="679" y="558"/><use href="#m39" x="687" y="558"/><use href="#m2e" x="695" y="558"/><use href="#m33" x="703" y="558"/><use href="#m37" x="711" y="558"/><use href="#m33" x="719" y="558"/><use href="#m34" x="727" y="558"/><use href="#k547d" x="624" y="578"/><use href="#k4ee4" x="640" y="578"/><use href="#m3a" x="655" y="578"/></g>
<use href="#s41" x="648" y="47"/><use href="#s75" x="655" y="47"/><use href="#s74" x="661" y="47"/><use href="#s6f" x="664" y="47"/><use href="#s43" x="670" y="47"/><use href="#s41" x="677" y="47"/><use href="#s44" x="684" y="47"/><use href="#c6587" x="695" y="46"/><use href="#c672c" x="707" y="46"/><use href="#c7a97" x="719" y="46"/><use href="#c53e3" x="731" y="46"/><use href="#s2d" x="745" y="47"/><use href="#s44" x="752" y="47"/><use href="#s3a" x="760" y="47"/><use href="#s5c" x="763" y="47"/><use href="#c6211" x="767" y="46"/><use href="#c7684" x="779" y="46"/><use href="#s5c" x="791" y="47"/><use href="#s43" x="794" y="47"/><use href="#s41" x="802" y="47"/><use href="#s44" x="810" y="47"/><use href="#s5c" x="818" y="47"/><use href="#s2e" x="822" y="47"/><use href="#s2e" x="825" y="47"/><use href="#s2e" x="828" y="47"/><use href="#c7f16" x="622" y="66"/><use href="#c8f91" x="634" y="66"/><use href="#s28" x="646" y="66"/><use href="#s45" x="650" y="66"/><use href="#s29" x="657" y="66"/><rect x="651" y="79" width="6" height="1"/><use href="#c9762" x="267" y="213"/><use href="#c57df" x="279" y="213"/><use href="#c9762" x="279" y="245"/><use href="#c79ef" x="291" y="245"/><use href="#c5468" x="279" y="262"/><use href="#c957f" x="291" y="262"/><use href="#s33" x="346" y="247"/><use href="#s38" x="352" y="247"/><use href="#s37" x="358" y="247"/><use href="#s39" x="364" y="247"/><use href="#s2e" x="370" y="247"/><use href="#s32" x="374" y="247"/><use href="#s32" x="380" y="247"/><use href="#s33" x="386" y="247"/><use href="#s32" x="346" y="264"/><use href="#s39" x="352" y="264"/><use href="#s37" x="358" y="264"/><use href="#s2e" x="364" y="264"/><use href="#s38" x="367" y="264"/><use href="#s37" x="374" y="264"/><use href="#s30" x="380" y="264"/><use href="#s32" x="386" y="264"/></svg>
</body></html>
